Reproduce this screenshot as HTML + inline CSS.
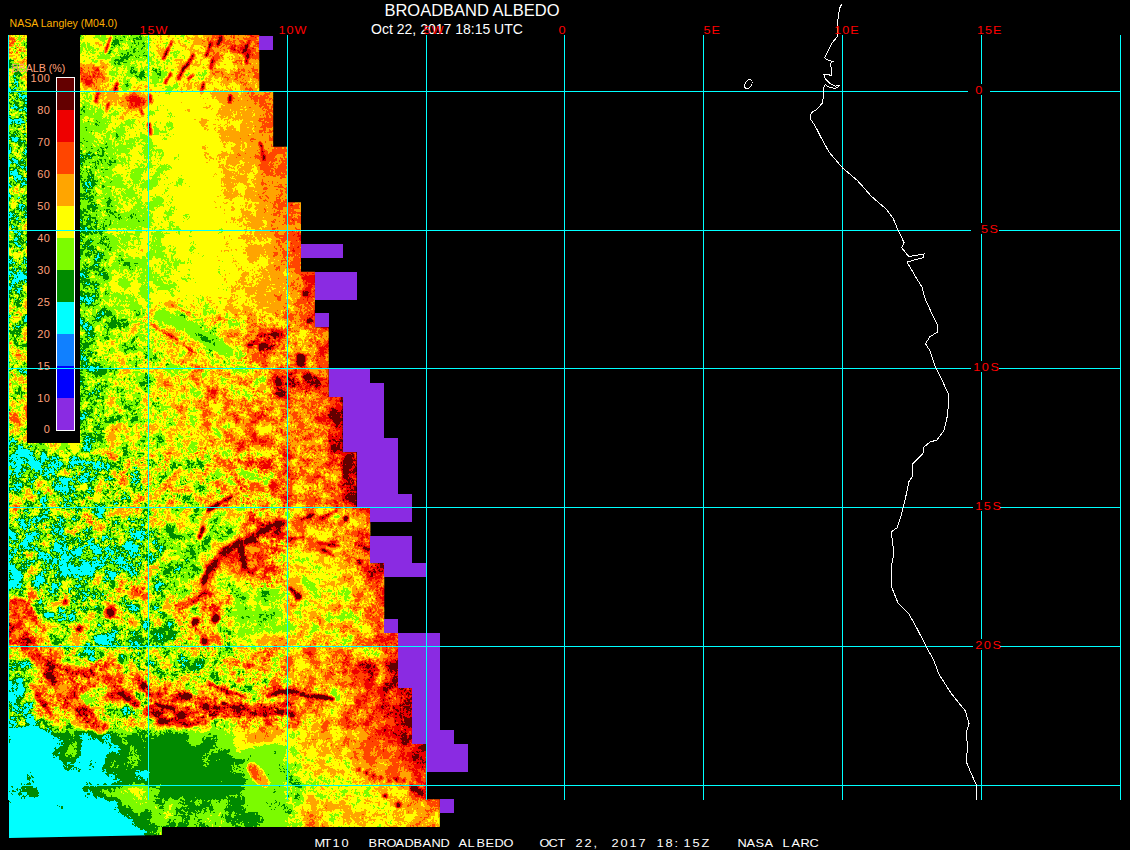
<!DOCTYPE html>
<html><head><meta charset="utf-8"><title>BROADBAND ALBEDO</title>
<style>
html,body{margin:0;padding:0;background:#000;width:1130px;height:850px;overflow:hidden}
svg{display:block;position:absolute;left:0;top:0}
text{white-space:pre}
</style></head><body>
<svg width="1130" height="850" viewBox="0 0 1130 850">
<defs>
<filter id="b3" filterUnits="userSpaceOnUse" x="-32.1" y="-5.9" width="527.4" height="888.3" color-interpolation-filters="sRGB"><feGaussianBlur stdDeviation="3.2"/></filter>
<filter id="alb" filterUnits="userSpaceOnUse" x="-32.1" y="-5.9" width="527.4" height="888.3" color-interpolation-filters="sRGB">
<feGaussianBlur in="SourceGraphic" stdDeviation="1.1" result="bl"/>
<feColorMatrix in="bl" type="matrix" values="1 0 0 0 0 1 0 0 0 0 1 0 0 0 0 0 0 0 0 1" result="F"/>
<feColorMatrix in="bl" type="matrix" values="0 1 0 0 0 0 1 0 0 0 0 1 0 0 0 0 0 0 0 1" result="A"/>
<feTurbulence type="fractalNoise" baseFrequency="0.085" numOctaves="3" seed="7" result="tb1"/>
<feTurbulence type="fractalNoise" baseFrequency="0.42" numOctaves="2" seed="3" result="tb2"/>
<feComposite in="tb1" in2="tb2" operator="arithmetic" k1="0" k2="0.62" k3="0.38" k4="0" result="tb"/>
<feColorMatrix in="tb" type="matrix" values="3.2 0 0 0 -1.1 3.2 0 0 0 -1.1 3.2 0 0 0 -1.1 0 0 0 0 1" result="Nz"/>
<feComposite in="Nz" in2="A" operator="arithmetic" k1="1" k2="0" k3="-0.5" k4="0.5" result="T"/>
<feComposite in="F" in2="T" operator="arithmetic" k1="0" k2="1" k3="1" k4="-0.5" result="V"/>
<feComponentTransfer in="V">
<feFuncR type="discrete" tableValues="0.000 0.000 0.000 0.000 0.000 0.486 1.000 1.000 1.000 0.933 0.392"/>
<feFuncG type="discrete" tableValues="1.000 1.000 1.000 1.000 0.545 0.988 1.000 0.647 0.271 0.000 0.000"/>
<feFuncB type="discrete" tableValues="1.000 1.000 1.000 1.000 0.000 0.000 0.000 0.000 0.000 0.000 0.000"/>
</feComponentTransfer>
</filter>
<clipPath id="dclip"><polygon points="9.0,35.0 259.3,35.0 259.3,49.7 259.3,49.7 259.3,63.5 259.3,63.5 259.3,77.4 259.3,77.4 259.3,91.3 273.2,91.3 273.2,105.2 273.2,105.2 273.2,119.1 273.2,119.1 273.2,132.9 273.2,132.9 273.2,146.8 287.1,146.8 287.1,160.7 287.1,160.7 287.1,174.6 287.1,174.6 287.1,188.5 287.1,188.5 287.1,202.3 301.0,202.3 301.0,216.2 301.0,216.2 301.0,230.1 301.0,230.1 301.0,244.0 301.0,244.0 301.0,257.9 301.0,257.9 301.0,271.7 314.9,271.7 314.9,285.6 314.9,285.6 314.9,299.5 314.9,299.5 314.9,313.4 314.9,313.4 314.9,327.3 328.7,327.3 328.7,341.1 328.7,341.1 328.7,355.0 328.7,355.0 328.7,368.9 328.7,368.9 328.7,382.8 328.7,382.8 328.7,396.7 342.6,396.7 342.6,410.5 342.6,410.5 342.6,424.4 342.6,424.4 342.6,438.3 342.6,438.3 342.6,452.2 356.5,452.2 356.5,466.1 356.5,466.1 356.5,479.9 356.5,479.9 356.5,493.8 356.5,493.8 356.5,507.7 370.4,507.7 370.4,521.6 370.4,521.6 370.4,535.5 370.4,535.5 370.4,549.3 370.4,549.3 370.4,563.2 384.3,563.2 384.3,577.1 384.3,577.1 384.3,591.0 384.3,591.0 384.3,604.9 384.3,604.9 384.3,618.7 384.3,618.7 384.3,632.6 398.1,632.6 398.1,646.5 398.1,646.5 398.1,660.4 398.1,660.4 398.1,674.3 398.1,674.3 398.1,688.1 412.0,688.1 412.0,702.0 412.0,702.0 412.0,715.9 412.0,715.9 412.0,729.8 412.0,729.8 412.0,743.7 425.9,743.7 425.9,757.5 425.9,757.5 425.9,771.4 425.9,771.4 425.9,785.3 425.9,785.3 425.9,799.2 439.8,799.2 439.8,813.1 439.8,813.1 439.8,826.9 162.0,826.9 162.0,835.0 9.0,838.0"/></clipPath>
</defs>
<rect width="1130" height="850" fill="#000"/>
<g clip-path="url(#dclip)">
<g filter="url(#alb)">
<g filter="url(#b3)"><g transform="translate(9.50 35.78) scale(13.88)" shape-rendering="crispEdges"><rect x="-3" y="-3" width="4" height="1" fill="#a25800"/><rect x="1" y="-3" width="1" height="1" fill="#975800"/><rect x="2" y="-3" width="2" height="1" fill="#972e00"/><rect x="4" y="-3" width="2" height="1" fill="#832e00"/><rect x="6" y="-3" width="1" height="1" fill="#8f2e00"/><rect x="7" y="-3" width="1" height="1" fill="#812e00"/><rect x="8" y="-3" width="1" height="1" fill="#882e00"/><rect x="9" y="-3" width="1" height="1" fill="#812e00"/><rect x="10" y="-3" width="1" height="1" fill="#962e00"/><rect x="11" y="-3" width="1" height="1" fill="#932e00"/><rect x="12" y="-3" width="1" height="1" fill="#982e00"/><rect x="13" y="-3" width="1" height="1" fill="#9c2e00"/><rect x="14" y="-3" width="1" height="1" fill="#b72e00"/><rect x="15" y="-3" width="2" height="1" fill="#bc2e00"/><rect x="17" y="-3" width="9" height="1" fill="#c02e00"/><rect x="26" y="-3" width="9" height="1" fill="#bc2e00"/><rect x="-3" y="-2" width="4" height="1" fill="#a25800"/><rect x="1" y="-2" width="1" height="1" fill="#975800"/><rect x="2" y="-2" width="2" height="1" fill="#972e00"/><rect x="4" y="-2" width="2" height="1" fill="#832e00"/><rect x="6" y="-2" width="1" height="1" fill="#8f2e00"/><rect x="7" y="-2" width="1" height="1" fill="#812e00"/><rect x="8" y="-2" width="1" height="1" fill="#882e00"/><rect x="9" y="-2" width="1" height="1" fill="#812e00"/><rect x="10" y="-2" width="1" height="1" fill="#962e00"/><rect x="11" y="-2" width="1" height="1" fill="#932e00"/><rect x="12" y="-2" width="1" height="1" fill="#982e00"/><rect x="13" y="-2" width="1" height="1" fill="#9c2e00"/><rect x="14" y="-2" width="1" height="1" fill="#b72e00"/><rect x="15" y="-2" width="2" height="1" fill="#bc2e00"/><rect x="17" y="-2" width="9" height="1" fill="#c02e00"/><rect x="26" y="-2" width="9" height="1" fill="#bc2e00"/><rect x="-3" y="-1" width="4" height="1" fill="#a25800"/><rect x="1" y="-1" width="1" height="1" fill="#975800"/><rect x="2" y="-1" width="2" height="1" fill="#972e00"/><rect x="4" y="-1" width="2" height="1" fill="#832e00"/><rect x="6" y="-1" width="1" height="1" fill="#8f2e00"/><rect x="7" y="-1" width="1" height="1" fill="#812e00"/><rect x="8" y="-1" width="1" height="1" fill="#882e00"/><rect x="9" y="-1" width="1" height="1" fill="#812e00"/><rect x="10" y="-1" width="1" height="1" fill="#962e00"/><rect x="11" y="-1" width="1" height="1" fill="#932e00"/><rect x="12" y="-1" width="1" height="1" fill="#982e00"/><rect x="13" y="-1" width="1" height="1" fill="#9c2e00"/><rect x="14" y="-1" width="1" height="1" fill="#b72e00"/><rect x="15" y="-1" width="2" height="1" fill="#bc2e00"/><rect x="17" y="-1" width="9" height="1" fill="#c02e00"/><rect x="26" y="-1" width="9" height="1" fill="#bc2e00"/><rect x="-3" y="0" width="4" height="1" fill="#a25800"/><rect x="1" y="0" width="1" height="1" fill="#975800"/><rect x="2" y="0" width="2" height="1" fill="#972e00"/><rect x="4" y="0" width="2" height="1" fill="#832e00"/><rect x="6" y="0" width="1" height="1" fill="#8f2e00"/><rect x="7" y="0" width="1" height="1" fill="#812e00"/><rect x="8" y="0" width="1" height="1" fill="#882e00"/><rect x="9" y="0" width="1" height="1" fill="#812e00"/><rect x="10" y="0" width="1" height="1" fill="#962e00"/><rect x="11" y="0" width="1" height="1" fill="#932e00"/><rect x="12" y="0" width="1" height="1" fill="#982e00"/><rect x="13" y="0" width="1" height="1" fill="#9c2e00"/><rect x="14" y="0" width="1" height="1" fill="#b72e00"/><rect x="15" y="0" width="2" height="1" fill="#bc2e00"/><rect x="17" y="0" width="9" height="1" fill="#c02e00"/><rect x="26" y="0" width="9" height="1" fill="#bc2e00"/><rect x="-3" y="1" width="5" height="1" fill="#975800"/><rect x="2" y="1" width="2" height="1" fill="#972e00"/><rect x="4" y="1" width="2" height="1" fill="#8f2e00"/><rect x="6" y="1" width="1" height="1" fill="#882e00"/><rect x="7" y="1" width="1" height="1" fill="#772e00"/><rect x="8" y="1" width="1" height="1" fill="#7c2e00"/><rect x="9" y="1" width="1" height="1" fill="#7e2e00"/><rect x="10" y="1" width="1" height="1" fill="#8c2e00"/><rect x="11" y="1" width="1" height="1" fill="#962e00"/><rect x="12" y="1" width="1" height="1" fill="#932e00"/><rect x="13" y="1" width="1" height="1" fill="#9a2e00"/><rect x="14" y="1" width="1" height="1" fill="#b52e00"/><rect x="15" y="1" width="1" height="1" fill="#a92e00"/><rect x="16" y="1" width="1" height="1" fill="#ae2e00"/><rect x="17" y="1" width="18" height="1" fill="#bc2e00"/><rect x="-3" y="2" width="5" height="1" fill="#8b5800"/><rect x="2" y="2" width="2" height="1" fill="#8b2e00"/><rect x="4" y="2" width="2" height="1" fill="#b52e00"/><rect x="6" y="2" width="1" height="1" fill="#b32e00"/><rect x="7" y="2" width="1" height="1" fill="#8c2e00"/><rect x="8" y="2" width="1" height="1" fill="#7c2e00"/><rect x="9" y="2" width="1" height="1" fill="#7e2e00"/><rect x="10" y="2" width="1" height="1" fill="#852e00"/><rect x="11" y="2" width="1" height="1" fill="#932e00"/><rect x="12" y="2" width="2" height="1" fill="#9a2e00"/><rect x="14" y="2" width="1" height="1" fill="#a52e00"/><rect x="15" y="2" width="1" height="1" fill="#a72e00"/><rect x="16" y="2" width="1" height="1" fill="#a92e00"/><rect x="17" y="2" width="3" height="1" fill="#b52e00"/><rect x="20" y="2" width="15" height="1" fill="#bc2e00"/><rect x="-3" y="3" width="5" height="1" fill="#805800"/><rect x="2" y="3" width="2" height="1" fill="#802e00"/><rect x="4" y="3" width="3" height="1" fill="#b52e00"/><rect x="7" y="3" width="1" height="1" fill="#962e00"/><rect x="8" y="3" width="1" height="1" fill="#832e00"/><rect x="9" y="3" width="1" height="1" fill="#8c2e00"/><rect x="10" y="3" width="1" height="1" fill="#882e00"/><rect x="11" y="3" width="1" height="1" fill="#912e00"/><rect x="12" y="3" width="1" height="1" fill="#9a2e00"/><rect x="13" y="3" width="1" height="1" fill="#9c2e00"/><rect x="14" y="3" width="1" height="1" fill="#a22e00"/><rect x="15" y="3" width="1" height="1" fill="#a72e00"/><rect x="16" y="3" width="1" height="1" fill="#a92e00"/><rect x="17" y="3" width="2" height="1" fill="#b02e00"/><rect x="19" y="3" width="12" height="1" fill="#bc2e00"/><rect x="31" y="3" width="4" height="1" fill="#c02e00"/><rect x="-3" y="4" width="5" height="1" fill="#6d5800"/><rect x="2" y="4" width="2" height="1" fill="#6d2e00"/><rect x="4" y="4" width="1" height="1" fill="#8b2e00"/><rect x="5" y="4" width="1" height="1" fill="#8b2500"/><rect x="6" y="4" width="1" height="1" fill="#a22500"/><rect x="7" y="4" width="1" height="1" fill="#a52500"/><rect x="8" y="4" width="1" height="1" fill="#b52500"/><rect x="9" y="4" width="1" height="1" fill="#b32500"/><rect x="10" y="4" width="1" height="1" fill="#9b1500"/><rect x="11" y="4" width="1" height="1" fill="#941500"/><rect x="12" y="4" width="1" height="1" fill="#991500"/><rect x="13" y="4" width="1" height="1" fill="#9b1500"/><rect x="14" y="4" width="1" height="1" fill="#9e1500"/><rect x="15" y="4" width="2" height="1" fill="#ac1c00"/><rect x="17" y="4" width="1" height="1" fill="#ae1c00"/><rect x="18" y="4" width="2" height="1" fill="#bc1c00"/><rect x="20" y="4" width="7" height="1" fill="#bc2e00"/><rect x="27" y="4" width="8" height="1" fill="#c02e00"/><rect x="-3" y="5" width="5" height="1" fill="#6f5800"/><rect x="2" y="5" width="2" height="1" fill="#6f2e00"/><rect x="4" y="5" width="1" height="1" fill="#802e00"/><rect x="5" y="5" width="1" height="1" fill="#802500"/><rect x="6" y="5" width="1" height="1" fill="#8b2500"/><rect x="7" y="5" width="1" height="1" fill="#972500"/><rect x="8" y="5" width="1" height="1" fill="#9e2500"/><rect x="9" y="5" width="1" height="1" fill="#a22500"/><rect x="10" y="5" width="2" height="1" fill="#921500"/><rect x="12" y="5" width="2" height="1" fill="#991500"/><rect x="14" y="5" width="1" height="1" fill="#9b1500"/><rect x="15" y="5" width="1" height="1" fill="#a71c00"/><rect x="16" y="5" width="1" height="1" fill="#a51c00"/><rect x="17" y="5" width="1" height="1" fill="#ae1c00"/><rect x="18" y="5" width="2" height="1" fill="#b91c00"/><rect x="20" y="5" width="4" height="1" fill="#b92e00"/><rect x="24" y="5" width="11" height="1" fill="#c02e00"/><rect x="-3" y="6" width="5" height="1" fill="#805800"/><rect x="2" y="6" width="3" height="1" fill="#802e00"/><rect x="5" y="6" width="1" height="1" fill="#802500"/><rect x="6" y="6" width="2" height="1" fill="#842500"/><rect x="8" y="6" width="1" height="1" fill="#8b2500"/><rect x="9" y="6" width="1" height="1" fill="#922500"/><rect x="10" y="6" width="1" height="1" fill="#8b1500"/><rect x="11" y="6" width="1" height="1" fill="#921500"/><rect x="12" y="6" width="1" height="1" fill="#971500"/><rect x="13" y="6" width="1" height="1" fill="#991500"/><rect x="14" y="6" width="1" height="1" fill="#9b1500"/><rect x="15" y="6" width="1" height="1" fill="#a71c00"/><rect x="16" y="6" width="1" height="1" fill="#a21c00"/><rect x="17" y="6" width="1" height="1" fill="#ae1c00"/><rect x="18" y="6" width="2" height="1" fill="#b91c00"/><rect x="20" y="6" width="1" height="1" fill="#b92e00"/><rect x="21" y="6" width="14" height="1" fill="#c02e00"/><rect x="-3" y="7" width="5" height="1" fill="#745800"/><rect x="2" y="7" width="2" height="1" fill="#742e00"/><rect x="4" y="7" width="1" height="1" fill="#7d2e00"/><rect x="5" y="7" width="1" height="1" fill="#7d2500"/><rect x="6" y="7" width="1" height="1" fill="#822500"/><rect x="7" y="7" width="1" height="1" fill="#842500"/><rect x="8" y="7" width="1" height="1" fill="#892500"/><rect x="9" y="7" width="1" height="1" fill="#8d2500"/><rect x="10" y="7" width="1" height="1" fill="#8b1500"/><rect x="11" y="7" width="1" height="1" fill="#921500"/><rect x="12" y="7" width="2" height="1" fill="#971500"/><rect x="14" y="7" width="1" height="1" fill="#991500"/><rect x="15" y="7" width="1" height="1" fill="#a51c00"/><rect x="16" y="7" width="1" height="1" fill="#ac1c00"/><rect x="17" y="7" width="1" height="1" fill="#ae1c00"/><rect x="18" y="7" width="2" height="1" fill="#b71c00"/><rect x="20" y="7" width="15" height="1" fill="#c02e00"/><rect x="-3" y="8" width="5" height="1" fill="#6d5800"/><rect x="2" y="8" width="2" height="1" fill="#6d2e00"/><rect x="4" y="8" width="1" height="1" fill="#752e00"/><rect x="5" y="8" width="1" height="1" fill="#753800"/><rect x="6" y="8" width="1" height="1" fill="#7d3800"/><rect x="7" y="8" width="1" height="1" fill="#842500"/><rect x="8" y="8" width="1" height="1" fill="#892500"/><rect x="9" y="8" width="1" height="1" fill="#8d2500"/><rect x="10" y="8" width="1" height="1" fill="#891500"/><rect x="11" y="8" width="1" height="1" fill="#901500"/><rect x="12" y="8" width="2" height="1" fill="#971500"/><rect x="14" y="8" width="1" height="1" fill="#991500"/><rect x="15" y="8" width="1" height="1" fill="#a51c00"/><rect x="16" y="8" width="1" height="1" fill="#ae1c00"/><rect x="17" y="8" width="1" height="1" fill="#ac1c00"/><rect x="18" y="8" width="1" height="1" fill="#b91c00"/><rect x="19" y="8" width="1" height="1" fill="#c01c00"/><rect x="20" y="8" width="8" height="1" fill="#c02e00"/><rect x="28" y="8" width="7" height="1" fill="#be2e00"/><rect x="-3" y="9" width="5" height="1" fill="#685800"/><rect x="2" y="9" width="2" height="1" fill="#682e00"/><rect x="4" y="9" width="1" height="1" fill="#732e00"/><rect x="5" y="9" width="1" height="1" fill="#733800"/><rect x="6" y="9" width="1" height="1" fill="#7d3800"/><rect x="7" y="9" width="1" height="1" fill="#862500"/><rect x="8" y="9" width="1" height="1" fill="#892500"/><rect x="9" y="9" width="1" height="1" fill="#8d2500"/><rect x="10" y="9" width="1" height="1" fill="#8b1500"/><rect x="11" y="9" width="1" height="1" fill="#901500"/><rect x="12" y="9" width="2" height="1" fill="#971500"/><rect x="14" y="9" width="1" height="1" fill="#991500"/><rect x="15" y="9" width="1" height="1" fill="#9e1c00"/><rect x="16" y="9" width="2" height="1" fill="#a91c00"/><rect x="18" y="9" width="1" height="1" fill="#be1c00"/><rect x="19" y="9" width="1" height="1" fill="#c01c00"/><rect x="20" y="9" width="5" height="1" fill="#c02e00"/><rect x="25" y="9" width="10" height="1" fill="#be2e00"/><rect x="-3" y="10" width="5" height="1" fill="#745800"/><rect x="2" y="10" width="2" height="1" fill="#742e00"/><rect x="4" y="10" width="1" height="1" fill="#752e00"/><rect x="5" y="10" width="1" height="1" fill="#753800"/><rect x="6" y="10" width="1" height="1" fill="#7d3800"/><rect x="7" y="10" width="1" height="1" fill="#862500"/><rect x="8" y="10" width="1" height="1" fill="#892500"/><rect x="9" y="10" width="1" height="1" fill="#8b2500"/><rect x="10" y="10" width="1" height="1" fill="#8b1500"/><rect x="11" y="10" width="1" height="1" fill="#901500"/><rect x="12" y="10" width="1" height="1" fill="#941500"/><rect x="13" y="10" width="2" height="1" fill="#971500"/><rect x="15" y="10" width="1" height="1" fill="#a01c00"/><rect x="16" y="10" width="1" height="1" fill="#a71c00"/><rect x="17" y="10" width="1" height="1" fill="#a21c00"/><rect x="18" y="10" width="1" height="1" fill="#ae1c00"/><rect x="19" y="10" width="1" height="1" fill="#bc1c00"/><rect x="20" y="10" width="2" height="1" fill="#bc2e00"/><rect x="22" y="10" width="13" height="1" fill="#be2e00"/><rect x="-3" y="11" width="5" height="1" fill="#805800"/><rect x="2" y="11" width="2" height="1" fill="#802e00"/><rect x="4" y="11" width="1" height="1" fill="#732e00"/><rect x="5" y="11" width="1" height="1" fill="#733800"/><rect x="6" y="11" width="1" height="1" fill="#7b3800"/><rect x="7" y="11" width="1" height="1" fill="#862500"/><rect x="8" y="11" width="2" height="1" fill="#892500"/><rect x="10" y="11" width="1" height="1" fill="#8b1500"/><rect x="11" y="11" width="1" height="1" fill="#901500"/><rect x="12" y="11" width="1" height="1" fill="#941500"/><rect x="13" y="11" width="2" height="1" fill="#971500"/><rect x="15" y="11" width="2" height="1" fill="#9e1c00"/><rect x="17" y="11" width="1" height="1" fill="#a71c00"/><rect x="18" y="11" width="1" height="1" fill="#b01c00"/><rect x="19" y="11" width="1" height="1" fill="#b91c00"/><rect x="20" y="11" width="1" height="1" fill="#b92e00"/><rect x="21" y="11" width="14" height="1" fill="#be2e00"/><rect x="-3" y="12" width="5" height="1" fill="#6f5800"/><rect x="2" y="12" width="2" height="1" fill="#6f2e00"/><rect x="4" y="12" width="1" height="1" fill="#6e2e00"/><rect x="5" y="12" width="1" height="1" fill="#6e3800"/><rect x="6" y="12" width="1" height="1" fill="#763800"/><rect x="7" y="12" width="1" height="1" fill="#842500"/><rect x="8" y="12" width="1" height="1" fill="#862500"/><rect x="9" y="12" width="1" height="1" fill="#842500"/><rect x="10" y="12" width="1" height="1" fill="#8b1500"/><rect x="11" y="12" width="1" height="1" fill="#901500"/><rect x="12" y="12" width="1" height="1" fill="#941500"/><rect x="13" y="12" width="2" height="1" fill="#971500"/><rect x="15" y="12" width="1" height="1" fill="#9b1c00"/><rect x="16" y="12" width="1" height="1" fill="#9e1c00"/><rect x="17" y="12" width="1" height="1" fill="#a91c00"/><rect x="18" y="12" width="1" height="1" fill="#ae1c00"/><rect x="19" y="12" width="1" height="1" fill="#b31c00"/><rect x="20" y="12" width="3" height="1" fill="#be2a00"/><rect x="23" y="12" width="12" height="1" fill="#be2e00"/><rect x="-3" y="13" width="5" height="1" fill="#805800"/><rect x="2" y="13" width="2" height="1" fill="#802e00"/><rect x="4" y="13" width="1" height="1" fill="#732e00"/><rect x="5" y="13" width="1" height="1" fill="#733800"/><rect x="6" y="13" width="1" height="1" fill="#723800"/><rect x="7" y="13" width="1" height="1" fill="#802500"/><rect x="8" y="13" width="2" height="1" fill="#822500"/><rect x="10" y="13" width="1" height="1" fill="#8b1500"/><rect x="11" y="13" width="1" height="1" fill="#901500"/><rect x="12" y="13" width="2" height="1" fill="#941500"/><rect x="14" y="13" width="1" height="1" fill="#971500"/><rect x="15" y="13" width="1" height="1" fill="#991c00"/><rect x="16" y="13" width="1" height="1" fill="#a01c00"/><rect x="17" y="13" width="1" height="1" fill="#a51c00"/><rect x="18" y="13" width="1" height="1" fill="#ae1c00"/><rect x="19" y="13" width="1" height="1" fill="#b31c00"/><rect x="20" y="13" width="3" height="1" fill="#c02a00"/><rect x="23" y="13" width="6" height="1" fill="#c02e00"/><rect x="29" y="13" width="6" height="1" fill="#d12e00"/><rect x="-3" y="14" width="5" height="1" fill="#7b5800"/><rect x="2" y="14" width="2" height="1" fill="#7b2e00"/><rect x="4" y="14" width="1" height="1" fill="#752e00"/><rect x="5" y="14" width="1" height="1" fill="#753800"/><rect x="6" y="14" width="1" height="1" fill="#7d3800"/><rect x="7" y="14" width="1" height="1" fill="#8d2500"/><rect x="8" y="14" width="1" height="1" fill="#862500"/><rect x="9" y="14" width="1" height="1" fill="#8b2500"/><rect x="10" y="14" width="1" height="1" fill="#861500"/><rect x="11" y="14" width="1" height="1" fill="#8d1500"/><rect x="12" y="14" width="1" height="1" fill="#921500"/><rect x="13" y="14" width="2" height="1" fill="#971500"/><rect x="15" y="14" width="1" height="1" fill="#971c00"/><rect x="16" y="14" width="1" height="1" fill="#991c00"/><rect x="17" y="14" width="1" height="1" fill="#ac1c00"/><rect x="18" y="14" width="1" height="1" fill="#a91c00"/><rect x="19" y="14" width="1" height="1" fill="#b91c00"/><rect x="20" y="14" width="3" height="1" fill="#cc2a00"/><rect x="23" y="14" width="3" height="1" fill="#cc2e00"/><rect x="26" y="14" width="9" height="1" fill="#d12e00"/><rect x="-3" y="15" width="5" height="1" fill="#765800"/><rect x="2" y="15" width="2" height="1" fill="#762e00"/><rect x="4" y="15" width="1" height="1" fill="#702e00"/><rect x="5" y="15" width="1" height="1" fill="#703800"/><rect x="6" y="15" width="1" height="1" fill="#743800"/><rect x="7" y="15" width="1" height="1" fill="#802500"/><rect x="8" y="15" width="1" height="1" fill="#862500"/><rect x="9" y="15" width="1" height="1" fill="#902500"/><rect x="10" y="15" width="1" height="1" fill="#891500"/><rect x="11" y="15" width="1" height="1" fill="#8b1500"/><rect x="12" y="15" width="1" height="1" fill="#901500"/><rect x="13" y="15" width="1" height="1" fill="#941500"/><rect x="14" y="15" width="1" height="1" fill="#971500"/><rect x="15" y="15" width="1" height="1" fill="#971c00"/><rect x="16" y="15" width="1" height="1" fill="#991c00"/><rect x="17" y="15" width="2" height="1" fill="#a71c00"/><rect x="19" y="15" width="1" height="1" fill="#b51c00"/><rect x="20" y="15" width="3" height="1" fill="#c02a00"/><rect x="23" y="15" width="12" height="1" fill="#d12e00"/><rect x="-3" y="16" width="5" height="1" fill="#6d5800"/><rect x="2" y="16" width="2" height="1" fill="#6d2e00"/><rect x="4" y="16" width="1" height="1" fill="#702e00"/><rect x="5" y="16" width="1" height="1" fill="#703800"/><rect x="6" y="16" width="1" height="1" fill="#723800"/><rect x="7" y="16" width="1" height="1" fill="#862500"/><rect x="8" y="16" width="1" height="1" fill="#822500"/><rect x="9" y="16" width="1" height="1" fill="#862500"/><rect x="10" y="16" width="1" height="1" fill="#8b1500"/><rect x="11" y="16" width="1" height="1" fill="#891500"/><rect x="12" y="16" width="1" height="1" fill="#901500"/><rect x="13" y="16" width="1" height="1" fill="#941500"/><rect x="14" y="16" width="1" height="1" fill="#971500"/><rect x="15" y="16" width="1" height="1" fill="#971c00"/><rect x="16" y="16" width="1" height="1" fill="#991c00"/><rect x="17" y="16" width="1" height="1" fill="#9e1c00"/><rect x="18" y="16" width="1" height="1" fill="#a71c00"/><rect x="19" y="16" width="1" height="1" fill="#ae1c00"/><rect x="20" y="16" width="2" height="1" fill="#b92a00"/><rect x="22" y="16" width="1" height="1" fill="#d12a00"/><rect x="23" y="16" width="12" height="1" fill="#d12e00"/><rect x="-3" y="17" width="5" height="1" fill="#645800"/><rect x="2" y="17" width="2" height="1" fill="#642e00"/><rect x="4" y="17" width="1" height="1" fill="#6e2e00"/><rect x="5" y="17" width="1" height="1" fill="#6e3800"/><rect x="6" y="17" width="1" height="1" fill="#763800"/><rect x="7" y="17" width="1" height="1" fill="#8d2500"/><rect x="8" y="17" width="2" height="1" fill="#862500"/><rect x="10" y="17" width="2" height="1" fill="#8b1500"/><rect x="12" y="17" width="1" height="1" fill="#901500"/><rect x="13" y="17" width="1" height="1" fill="#941500"/><rect x="14" y="17" width="1" height="1" fill="#971500"/><rect x="15" y="17" width="1" height="1" fill="#971c00"/><rect x="16" y="17" width="1" height="1" fill="#991c00"/><rect x="17" y="17" width="1" height="1" fill="#a01c00"/><rect x="18" y="17" width="1" height="1" fill="#a91c00"/><rect x="19" y="17" width="1" height="1" fill="#ae1c00"/><rect x="20" y="17" width="1" height="1" fill="#b72a00"/><rect x="21" y="17" width="2" height="1" fill="#d12a00"/><rect x="23" y="17" width="7" height="1" fill="#d12e00"/><rect x="30" y="17" width="5" height="1" fill="#be2e00"/><rect x="-3" y="18" width="5" height="1" fill="#745800"/><rect x="2" y="18" width="2" height="1" fill="#742e00"/><rect x="4" y="18" width="1" height="1" fill="#702e00"/><rect x="5" y="18" width="1" height="1" fill="#703800"/><rect x="6" y="18" width="1" height="1" fill="#763800"/><rect x="7" y="18" width="1" height="1" fill="#862500"/><rect x="8" y="18" width="1" height="1" fill="#902500"/><rect x="9" y="18" width="1" height="1" fill="#862500"/><rect x="10" y="18" width="2" height="1" fill="#901500"/><rect x="12" y="18" width="1" height="1" fill="#921500"/><rect x="13" y="18" width="1" height="1" fill="#941500"/><rect x="14" y="18" width="1" height="1" fill="#971500"/><rect x="15" y="18" width="1" height="1" fill="#971c00"/><rect x="16" y="18" width="1" height="1" fill="#a21c00"/><rect x="17" y="18" width="1" height="1" fill="#a71c00"/><rect x="18" y="18" width="1" height="1" fill="#a91c00"/><rect x="19" y="18" width="1" height="1" fill="#ae1c00"/><rect x="20" y="18" width="1" height="1" fill="#ae2a00"/><rect x="21" y="18" width="2" height="1" fill="#cc2a00"/><rect x="23" y="18" width="4" height="1" fill="#cc2e00"/><rect x="27" y="18" width="8" height="1" fill="#be2e00"/><rect x="-3" y="19" width="5" height="1" fill="#925800"/><rect x="2" y="19" width="2" height="1" fill="#922e00"/><rect x="4" y="19" width="1" height="1" fill="#752e00"/><rect x="5" y="19" width="1" height="1" fill="#753800"/><rect x="6" y="19" width="1" height="1" fill="#7d3800"/><rect x="7" y="19" width="1" height="1" fill="#8b2500"/><rect x="8" y="19" width="1" height="1" fill="#862500"/><rect x="9" y="19" width="1" height="1" fill="#892500"/><rect x="10" y="19" width="4" height="1" fill="#972e00"/><rect x="14" y="19" width="1" height="1" fill="#992e00"/><rect x="15" y="19" width="1" height="1" fill="#9b1c00"/><rect x="16" y="19" width="2" height="1" fill="#a51c00"/><rect x="18" y="19" width="1" height="1" fill="#a91c00"/><rect x="19" y="19" width="1" height="1" fill="#ae1c00"/><rect x="20" y="19" width="1" height="1" fill="#ae2a00"/><rect x="21" y="19" width="2" height="1" fill="#bc2a00"/><rect x="23" y="19" width="1" height="1" fill="#bc2e00"/><rect x="24" y="19" width="11" height="1" fill="#be2e00"/><rect x="-3" y="20" width="5" height="1" fill="#745800"/><rect x="2" y="20" width="2" height="1" fill="#742e00"/><rect x="4" y="20" width="1" height="1" fill="#6c2e00"/><rect x="5" y="20" width="1" height="1" fill="#6c4100"/><rect x="6" y="20" width="1" height="1" fill="#6f4100"/><rect x="7" y="20" width="1" height="1" fill="#804100"/><rect x="8" y="20" width="1" height="1" fill="#864100"/><rect x="9" y="20" width="1" height="1" fill="#894100"/><rect x="10" y="20" width="1" height="1" fill="#9e4100"/><rect x="11" y="20" width="1" height="1" fill="#8b4100"/><rect x="12" y="20" width="1" height="1" fill="#894100"/><rect x="13" y="20" width="1" height="1" fill="#924100"/><rect x="14" y="20" width="2" height="1" fill="#a04100"/><rect x="16" y="20" width="1" height="1" fill="#a24100"/><rect x="17" y="20" width="2" height="1" fill="#a54100"/><rect x="19" y="20" width="1" height="1" fill="#a94100"/><rect x="20" y="20" width="1" height="1" fill="#bc3800"/><rect x="21" y="20" width="2" height="1" fill="#c73800"/><rect x="23" y="20" width="12" height="1" fill="#be3800"/><rect x="-3" y="21" width="5" height="1" fill="#8b5800"/><rect x="2" y="21" width="2" height="1" fill="#8b2e00"/><rect x="4" y="21" width="1" height="1" fill="#752e00"/><rect x="5" y="21" width="1" height="1" fill="#754100"/><rect x="6" y="21" width="1" height="1" fill="#7d4100"/><rect x="7" y="21" width="1" height="1" fill="#864100"/><rect x="8" y="21" width="2" height="1" fill="#8d4100"/><rect x="10" y="21" width="1" height="1" fill="#894100"/><rect x="11" y="21" width="1" height="1" fill="#974100"/><rect x="12" y="21" width="1" height="1" fill="#924100"/><rect x="13" y="21" width="1" height="1" fill="#844100"/><rect x="14" y="21" width="1" height="1" fill="#804100"/><rect x="15" y="21" width="1" height="1" fill="#9b4100"/><rect x="16" y="21" width="1" height="1" fill="#a24100"/><rect x="17" y="21" width="1" height="1" fill="#b34100"/><rect x="18" y="21" width="1" height="1" fill="#c04100"/><rect x="19" y="21" width="1" height="1" fill="#ce4100"/><rect x="20" y="21" width="1" height="1" fill="#a93800"/><rect x="21" y="21" width="1" height="1" fill="#ac3800"/><rect x="22" y="21" width="13" height="1" fill="#be3800"/><rect x="-3" y="22" width="5" height="1" fill="#995800"/><rect x="2" y="22" width="2" height="1" fill="#992e00"/><rect x="4" y="22" width="1" height="1" fill="#702e00"/><rect x="5" y="22" width="1" height="1" fill="#704100"/><rect x="6" y="22" width="1" height="1" fill="#7d4100"/><rect x="7" y="22" width="1" height="1" fill="#904100"/><rect x="8" y="22" width="1" height="1" fill="#804100"/><rect x="9" y="22" width="1" height="1" fill="#8d4100"/><rect x="10" y="22" width="1" height="1" fill="#894100"/><rect x="11" y="22" width="1" height="1" fill="#974100"/><rect x="12" y="22" width="1" height="1" fill="#a94100"/><rect x="13" y="22" width="1" height="1" fill="#9b4100"/><rect x="14" y="22" width="1" height="1" fill="#804100"/><rect x="15" y="22" width="1" height="1" fill="#8d4100"/><rect x="16" y="22" width="1" height="1" fill="#9e4100"/><rect x="17" y="22" width="1" height="1" fill="#bc4100"/><rect x="18" y="22" width="1" height="1" fill="#ca4100"/><rect x="19" y="22" width="1" height="1" fill="#b94100"/><rect x="20" y="22" width="1" height="1" fill="#a53800"/><rect x="21" y="22" width="1" height="1" fill="#a93800"/><rect x="22" y="22" width="9" height="1" fill="#c03800"/><rect x="31" y="22" width="4" height="1" fill="#e43800"/><rect x="-3" y="23" width="5" height="1" fill="#845800"/><rect x="2" y="23" width="2" height="1" fill="#842e00"/><rect x="4" y="23" width="1" height="1" fill="#6e2e00"/><rect x="5" y="23" width="1" height="1" fill="#6e4100"/><rect x="6" y="23" width="1" height="1" fill="#7d4100"/><rect x="7" y="23" width="1" height="1" fill="#8d4100"/><rect x="8" y="23" width="1" height="1" fill="#864100"/><rect x="9" y="23" width="2" height="1" fill="#8b4100"/><rect x="11" y="23" width="1" height="1" fill="#924100"/><rect x="12" y="23" width="1" height="1" fill="#9b4100"/><rect x="13" y="23" width="1" height="1" fill="#a54100"/><rect x="14" y="23" width="1" height="1" fill="#924100"/><rect x="15" y="23" width="1" height="1" fill="#8b4100"/><rect x="16" y="23" width="1" height="1" fill="#9b4100"/><rect x="17" y="23" width="1" height="1" fill="#a24100"/><rect x="18" y="23" width="1" height="1" fill="#b54100"/><rect x="19" y="23" width="1" height="1" fill="#ac4100"/><rect x="20" y="23" width="1" height="1" fill="#c03800"/><rect x="21" y="23" width="1" height="1" fill="#bc3800"/><rect x="22" y="23" width="6" height="1" fill="#c03800"/><rect x="28" y="23" width="7" height="1" fill="#e43800"/><rect x="-3" y="24" width="5" height="1" fill="#865800"/><rect x="2" y="24" width="2" height="1" fill="#862e00"/><rect x="4" y="24" width="1" height="1" fill="#752e00"/><rect x="5" y="24" width="1" height="1" fill="#754100"/><rect x="6" y="24" width="1" height="1" fill="#7d4100"/><rect x="7" y="24" width="1" height="1" fill="#844100"/><rect x="8" y="24" width="1" height="1" fill="#8b4100"/><rect x="9" y="24" width="1" height="1" fill="#844100"/><rect x="10" y="24" width="1" height="1" fill="#8d4100"/><rect x="11" y="24" width="1" height="1" fill="#9e4100"/><rect x="12" y="24" width="1" height="1" fill="#994100"/><rect x="13" y="24" width="1" height="1" fill="#a24100"/><rect x="14" y="24" width="1" height="1" fill="#a54100"/><rect x="15" y="24" width="2" height="1" fill="#9e4100"/><rect x="17" y="24" width="1" height="1" fill="#a24100"/><rect x="18" y="24" width="1" height="1" fill="#a94100"/><rect x="19" y="24" width="1" height="1" fill="#c54100"/><rect x="20" y="24" width="1" height="1" fill="#ae3800"/><rect x="21" y="24" width="1" height="1" fill="#c03800"/><rect x="22" y="24" width="3" height="1" fill="#c73800"/><rect x="25" y="24" width="10" height="1" fill="#e43800"/><rect x="-3" y="25" width="5" height="1" fill="#975800"/><rect x="2" y="25" width="2" height="1" fill="#972e00"/><rect x="4" y="25" width="1" height="1" fill="#752e00"/><rect x="5" y="25" width="1" height="1" fill="#754100"/><rect x="6" y="25" width="1" height="1" fill="#794100"/><rect x="7" y="25" width="1" height="1" fill="#804100"/><rect x="8" y="25" width="1" height="1" fill="#8d4100"/><rect x="9" y="25" width="1" height="1" fill="#894100"/><rect x="10" y="25" width="1" height="1" fill="#924100"/><rect x="11" y="25" width="2" height="1" fill="#9e4100"/><rect x="13" y="25" width="1" height="1" fill="#a04100"/><rect x="14" y="25" width="1" height="1" fill="#b74100"/><rect x="15" y="25" width="1" height="1" fill="#a24100"/><rect x="16" y="25" width="1" height="1" fill="#974100"/><rect x="17" y="25" width="1" height="1" fill="#a24100"/><rect x="18" y="25" width="1" height="1" fill="#a94100"/><rect x="19" y="25" width="1" height="1" fill="#d14100"/><rect x="20" y="25" width="1" height="1" fill="#bc3800"/><rect x="21" y="25" width="1" height="1" fill="#b53800"/><rect x="22" y="25" width="2" height="1" fill="#c03800"/><rect x="24" y="25" width="11" height="1" fill="#e43800"/><rect x="-3" y="26" width="5" height="1" fill="#995800"/><rect x="2" y="26" width="2" height="1" fill="#992e00"/><rect x="4" y="26" width="1" height="1" fill="#752e00"/><rect x="5" y="26" width="1" height="1" fill="#754100"/><rect x="6" y="26" width="1" height="1" fill="#7d4100"/><rect x="7" y="26" width="1" height="1" fill="#924100"/><rect x="8" y="26" width="1" height="1" fill="#8d4100"/><rect x="9" y="26" width="1" height="1" fill="#894100"/><rect x="10" y="26" width="1" height="1" fill="#924100"/><rect x="11" y="26" width="1" height="1" fill="#9b4100"/><rect x="12" y="26" width="2" height="1" fill="#9e4100"/><rect x="14" y="26" width="1" height="1" fill="#b94100"/><rect x="15" y="26" width="1" height="1" fill="#a94100"/><rect x="16" y="26" width="1" height="1" fill="#a74100"/><rect x="17" y="26" width="1" height="1" fill="#a94100"/><rect x="18" y="26" width="1" height="1" fill="#b34100"/><rect x="19" y="26" width="1" height="1" fill="#b94100"/><rect x="20" y="26" width="2" height="1" fill="#b53800"/><rect x="22" y="26" width="1" height="1" fill="#bc3800"/><rect x="23" y="26" width="12" height="1" fill="#e43800"/><rect x="-3" y="27" width="5" height="1" fill="#9b5800"/><rect x="2" y="27" width="2" height="1" fill="#9b2e00"/><rect x="4" y="27" width="1" height="1" fill="#702e00"/><rect x="5" y="27" width="1" height="1" fill="#704100"/><rect x="6" y="27" width="1" height="1" fill="#794100"/><rect x="7" y="27" width="1" height="1" fill="#8d4100"/><rect x="8" y="27" width="1" height="1" fill="#7d4100"/><rect x="9" y="27" width="1" height="1" fill="#804100"/><rect x="10" y="27" width="1" height="1" fill="#8d4100"/><rect x="11" y="27" width="1" height="1" fill="#974100"/><rect x="12" y="27" width="1" height="1" fill="#9b4100"/><rect x="13" y="27" width="1" height="1" fill="#9e4100"/><rect x="14" y="27" width="1" height="1" fill="#a54100"/><rect x="15" y="27" width="1" height="1" fill="#a94100"/><rect x="16" y="27" width="1" height="1" fill="#b54100"/><rect x="17" y="27" width="1" height="1" fill="#b74100"/><rect x="18" y="27" width="1" height="1" fill="#b54100"/><rect x="19" y="27" width="1" height="1" fill="#b74100"/><rect x="20" y="27" width="1" height="1" fill="#ac3800"/><rect x="21" y="27" width="1" height="1" fill="#b53800"/><rect x="22" y="27" width="1" height="1" fill="#be3800"/><rect x="23" y="27" width="12" height="1" fill="#e43800"/><rect x="-3" y="28" width="5" height="1" fill="#975800"/><rect x="2" y="28" width="1" height="1" fill="#972e00"/><rect x="3" y="28" width="1" height="1" fill="#9b2e00"/><rect x="4" y="28" width="1" height="1" fill="#752e00"/><rect x="5" y="28" width="1" height="1" fill="#754100"/><rect x="6" y="28" width="1" height="1" fill="#7d4100"/><rect x="7" y="28" width="1" height="1" fill="#9b4100"/><rect x="8" y="28" width="1" height="1" fill="#924100"/><rect x="9" y="28" width="1" height="1" fill="#904100"/><rect x="10" y="28" width="1" height="1" fill="#924100"/><rect x="11" y="28" width="1" height="1" fill="#8d4100"/><rect x="12" y="28" width="1" height="1" fill="#944100"/><rect x="13" y="28" width="1" height="1" fill="#9e4100"/><rect x="14" y="28" width="1" height="1" fill="#a24100"/><rect x="15" y="28" width="1" height="1" fill="#a74100"/><rect x="16" y="28" width="1" height="1" fill="#b54100"/><rect x="17" y="28" width="1" height="1" fill="#b74100"/><rect x="18" y="28" width="1" height="1" fill="#ac4100"/><rect x="19" y="28" width="1" height="1" fill="#b74100"/><rect x="20" y="28" width="1" height="1" fill="#b33800"/><rect x="21" y="28" width="1" height="1" fill="#b53800"/><rect x="22" y="28" width="1" height="1" fill="#b73800"/><rect x="23" y="28" width="12" height="1" fill="#e43800"/><rect x="-3" y="29" width="4" height="1" fill="#745800"/><rect x="1" y="29" width="1" height="1" fill="#6f5800"/><rect x="2" y="29" width="1" height="1" fill="#862e00"/><rect x="3" y="29" width="1" height="1" fill="#9b2e00"/><rect x="4" y="29" width="1" height="1" fill="#8b2e00"/><rect x="5" y="29" width="1" height="1" fill="#754100"/><rect x="6" y="29" width="1" height="1" fill="#7d4100"/><rect x="7" y="29" width="1" height="1" fill="#904100"/><rect x="8" y="29" width="1" height="1" fill="#8b4100"/><rect x="9" y="29" width="1" height="1" fill="#824100"/><rect x="10" y="29" width="1" height="1" fill="#924100"/><rect x="11" y="29" width="1" height="1" fill="#8d4100"/><rect x="12" y="29" width="1" height="1" fill="#924100"/><rect x="13" y="29" width="1" height="1" fill="#9b4100"/><rect x="14" y="29" width="2" height="1" fill="#a24100"/><rect x="16" y="29" width="1" height="1" fill="#b34100"/><rect x="17" y="29" width="1" height="1" fill="#b54100"/><rect x="18" y="29" width="1" height="1" fill="#b94100"/><rect x="19" y="29" width="1" height="1" fill="#be4100"/><rect x="20" y="29" width="2" height="1" fill="#b53800"/><rect x="22" y="29" width="1" height="1" fill="#b73800"/><rect x="23" y="29" width="12" height="1" fill="#e43800"/><rect x="-3" y="30" width="4" height="1" fill="#496100"/><rect x="1" y="30" width="1" height="1" fill="#596100"/><rect x="2" y="30" width="1" height="1" fill="#556100"/><rect x="3" y="30" width="1" height="1" fill="#606100"/><rect x="4" y="30" width="1" height="1" fill="#6c6100"/><rect x="5" y="30" width="1" height="1" fill="#726100"/><rect x="6" y="30" width="1" height="1" fill="#7d6100"/><rect x="7" y="30" width="1" height="1" fill="#a06100"/><rect x="8" y="30" width="1" height="1" fill="#906100"/><rect x="9" y="30" width="1" height="1" fill="#866100"/><rect x="10" y="30" width="1" height="1" fill="#975600"/><rect x="11" y="30" width="1" height="1" fill="#995600"/><rect x="12" y="30" width="1" height="1" fill="#945600"/><rect x="13" y="30" width="1" height="1" fill="#925600"/><rect x="14" y="30" width="1" height="1" fill="#9e5600"/><rect x="15" y="30" width="1" height="1" fill="#a05600"/><rect x="16" y="30" width="1" height="1" fill="#b35600"/><rect x="17" y="30" width="1" height="1" fill="#a95600"/><rect x="18" y="30" width="1" height="1" fill="#b55600"/><rect x="19" y="30" width="1" height="1" fill="#b95600"/><rect x="20" y="30" width="1" height="1" fill="#b73c00"/><rect x="21" y="30" width="1" height="1" fill="#b53c00"/><rect x="22" y="30" width="1" height="1" fill="#b73c00"/><rect x="23" y="30" width="1" height="1" fill="#c53c00"/><rect x="24" y="30" width="11" height="1" fill="#e43c00"/><rect x="-3" y="31" width="4" height="1" fill="#606100"/><rect x="1" y="31" width="1" height="1" fill="#596100"/><rect x="2" y="31" width="1" height="1" fill="#606100"/><rect x="3" y="31" width="1" height="1" fill="#676100"/><rect x="4" y="31" width="1" height="1" fill="#866100"/><rect x="5" y="31" width="1" height="1" fill="#696100"/><rect x="6" y="31" width="1" height="1" fill="#676100"/><rect x="7" y="31" width="1" height="1" fill="#846100"/><rect x="8" y="31" width="1" height="1" fill="#8d6100"/><rect x="9" y="31" width="1" height="1" fill="#846100"/><rect x="10" y="31" width="2" height="1" fill="#945600"/><rect x="12" y="31" width="1" height="1" fill="#905600"/><rect x="13" y="31" width="1" height="1" fill="#8b5600"/><rect x="14" y="31" width="1" height="1" fill="#9e5600"/><rect x="15" y="31" width="1" height="1" fill="#a55600"/><rect x="16" y="31" width="1" height="1" fill="#a05600"/><rect x="17" y="31" width="1" height="1" fill="#a25600"/><rect x="18" y="31" width="1" height="1" fill="#ae5600"/><rect x="19" y="31" width="1" height="1" fill="#bc5600"/><rect x="20" y="31" width="1" height="1" fill="#b73c00"/><rect x="21" y="31" width="1" height="1" fill="#ae3c00"/><rect x="22" y="31" width="1" height="1" fill="#b53c00"/><rect x="23" y="31" width="1" height="1" fill="#bc3c00"/><rect x="24" y="31" width="6" height="1" fill="#e43c00"/><rect x="30" y="31" width="5" height="1" fill="#b53c00"/><rect x="-3" y="32" width="4" height="1" fill="#8b6100"/><rect x="1" y="32" width="1" height="1" fill="#7a6100"/><rect x="2" y="32" width="1" height="1" fill="#976100"/><rect x="3" y="32" width="1" height="1" fill="#696100"/><rect x="4" y="32" width="1" height="1" fill="#5e6100"/><rect x="5" y="32" width="1" height="1" fill="#6c6100"/><rect x="6" y="32" width="1" height="1" fill="#7a6100"/><rect x="7" y="32" width="1" height="1" fill="#a26100"/><rect x="8" y="32" width="1" height="1" fill="#846100"/><rect x="9" y="32" width="1" height="1" fill="#8b6100"/><rect x="10" y="32" width="1" height="1" fill="#8b5600"/><rect x="11" y="32" width="1" height="1" fill="#975600"/><rect x="12" y="32" width="1" height="1" fill="#945600"/><rect x="13" y="32" width="1" height="1" fill="#895600"/><rect x="14" y="32" width="1" height="1" fill="#925600"/><rect x="15" y="32" width="1" height="1" fill="#a25600"/><rect x="16" y="32" width="1" height="1" fill="#ae5600"/><rect x="17" y="32" width="1" height="1" fill="#9e5600"/><rect x="18" y="32" width="1" height="1" fill="#a55600"/><rect x="19" y="32" width="1" height="1" fill="#bc5600"/><rect x="20" y="32" width="1" height="1" fill="#b93c00"/><rect x="21" y="32" width="1" height="1" fill="#b33c00"/><rect x="22" y="32" width="1" height="1" fill="#b73c00"/><rect x="23" y="32" width="1" height="1" fill="#be3c00"/><rect x="24" y="32" width="3" height="1" fill="#e43c00"/><rect x="27" y="32" width="8" height="1" fill="#b53c00"/><rect x="-3" y="33" width="4" height="1" fill="#926100"/><rect x="1" y="33" width="1" height="1" fill="#906100"/><rect x="2" y="33" width="1" height="1" fill="#7a6100"/><rect x="3" y="33" width="1" height="1" fill="#896100"/><rect x="4" y="33" width="1" height="1" fill="#6c6100"/><rect x="5" y="33" width="1" height="1" fill="#866100"/><rect x="6" y="33" width="1" height="1" fill="#606100"/><rect x="7" y="33" width="1" height="1" fill="#7c6100"/><rect x="8" y="33" width="1" height="1" fill="#8d6100"/><rect x="9" y="33" width="1" height="1" fill="#926100"/><rect x="10" y="33" width="1" height="1" fill="#945600"/><rect x="11" y="33" width="2" height="1" fill="#975600"/><rect x="13" y="33" width="1" height="1" fill="#905600"/><rect x="14" y="33" width="1" height="1" fill="#a95600"/><rect x="15" y="33" width="1" height="1" fill="#b55600"/><rect x="16" y="33" width="2" height="1" fill="#975600"/><rect x="18" y="33" width="1" height="1" fill="#a05600"/><rect x="19" y="33" width="1" height="1" fill="#b35600"/><rect x="20" y="33" width="2" height="1" fill="#ae3c00"/><rect x="22" y="33" width="1" height="1" fill="#b53c00"/><rect x="23" y="33" width="1" height="1" fill="#be3c00"/><rect x="24" y="33" width="2" height="1" fill="#e43c00"/><rect x="26" y="33" width="9" height="1" fill="#b53c00"/><rect x="-3" y="34" width="4" height="1" fill="#896100"/><rect x="1" y="34" width="1" height="1" fill="#6c6100"/><rect x="2" y="34" width="1" height="1" fill="#596100"/><rect x="3" y="34" width="1" height="1" fill="#696100"/><rect x="4" y="34" width="1" height="1" fill="#896100"/><rect x="5" y="34" width="1" height="1" fill="#906100"/><rect x="6" y="34" width="1" height="1" fill="#8b6100"/><rect x="7" y="34" width="1" height="1" fill="#846100"/><rect x="8" y="34" width="1" height="1" fill="#7a6100"/><rect x="9" y="34" width="1" height="1" fill="#8b6100"/><rect x="10" y="34" width="1" height="1" fill="#a55600"/><rect x="11" y="34" width="1" height="1" fill="#8b3a00"/><rect x="12" y="34" width="1" height="1" fill="#923a00"/><rect x="13" y="34" width="1" height="1" fill="#8b3a00"/><rect x="14" y="34" width="1" height="1" fill="#973a00"/><rect x="15" y="34" width="1" height="1" fill="#8b3a00"/><rect x="16" y="34" width="1" height="1" fill="#a53a00"/><rect x="17" y="34" width="1" height="1" fill="#b55600"/><rect x="18" y="34" width="2" height="1" fill="#a95600"/><rect x="20" y="34" width="1" height="1" fill="#a73c00"/><rect x="21" y="34" width="1" height="1" fill="#b93c00"/><rect x="22" y="34" width="1" height="1" fill="#b73c00"/><rect x="23" y="34" width="1" height="1" fill="#a23c00"/><rect x="24" y="34" width="1" height="1" fill="#a93c00"/><rect x="25" y="34" width="10" height="1" fill="#b53c00"/><rect x="-3" y="35" width="4" height="1" fill="#656100"/><rect x="1" y="35" width="1" height="1" fill="#676100"/><rect x="2" y="35" width="1" height="1" fill="#866100"/><rect x="3" y="35" width="1" height="1" fill="#656100"/><rect x="4" y="35" width="1" height="1" fill="#926100"/><rect x="5" y="35" width="1" height="1" fill="#8d6100"/><rect x="6" y="35" width="1" height="1" fill="#8b6100"/><rect x="7" y="35" width="1" height="1" fill="#846100"/><rect x="8" y="35" width="1" height="1" fill="#7a6100"/><rect x="9" y="35" width="1" height="1" fill="#696100"/><rect x="10" y="35" width="1" height="1" fill="#805600"/><rect x="11" y="35" width="1" height="1" fill="#803a00"/><rect x="12" y="35" width="1" height="1" fill="#893a00"/><rect x="13" y="35" width="1" height="1" fill="#973a00"/><rect x="14" y="35" width="1" height="1" fill="#803a00"/><rect x="15" y="35" width="1" height="1" fill="#823a00"/><rect x="16" y="35" width="1" height="1" fill="#8d3a00"/><rect x="17" y="35" width="1" height="1" fill="#ca5600"/><rect x="18" y="35" width="1" height="1" fill="#dc5600"/><rect x="19" y="35" width="1" height="1" fill="#d15600"/><rect x="20" y="35" width="2" height="1" fill="#ae3c00"/><rect x="22" y="35" width="1" height="1" fill="#a93c00"/><rect x="23" y="35" width="1" height="1" fill="#a53c00"/><rect x="24" y="35" width="1" height="1" fill="#a93c00"/><rect x="25" y="35" width="6" height="1" fill="#b53c00"/><rect x="31" y="35" width="4" height="1" fill="#e43c00"/><rect x="-3" y="36" width="4" height="1" fill="#5e6100"/><rect x="1" y="36" width="1" height="1" fill="#696100"/><rect x="2" y="36" width="1" height="1" fill="#8b6100"/><rect x="3" y="36" width="1" height="1" fill="#606100"/><rect x="4" y="36" width="1" height="1" fill="#6c6100"/><rect x="5" y="36" width="1" height="1" fill="#656100"/><rect x="6" y="36" width="1" height="1" fill="#7a6100"/><rect x="7" y="36" width="1" height="1" fill="#846100"/><rect x="8" y="36" width="1" height="1" fill="#636100"/><rect x="9" y="36" width="1" height="1" fill="#6c6100"/><rect x="10" y="36" width="1" height="1" fill="#765600"/><rect x="11" y="36" width="1" height="1" fill="#7d3a00"/><rect x="12" y="36" width="1" height="1" fill="#863a00"/><rect x="13" y="36" width="1" height="1" fill="#843a00"/><rect x="14" y="36" width="1" height="1" fill="#863a00"/><rect x="15" y="36" width="1" height="1" fill="#8b3a00"/><rect x="16" y="36" width="1" height="1" fill="#c53a00"/><rect x="17" y="36" width="1" height="1" fill="#cc5600"/><rect x="18" y="36" width="1" height="1" fill="#ae5600"/><rect x="19" y="36" width="1" height="1" fill="#a95600"/><rect x="20" y="36" width="1" height="1" fill="#b93c00"/><rect x="21" y="36" width="1" height="1" fill="#ae3c00"/><rect x="22" y="36" width="1" height="1" fill="#a93c00"/><rect x="23" y="36" width="1" height="1" fill="#b73c00"/><rect x="24" y="36" width="1" height="1" fill="#a93c00"/><rect x="25" y="36" width="3" height="1" fill="#c33c00"/><rect x="28" y="36" width="7" height="1" fill="#e43c00"/><rect x="-3" y="37" width="4" height="1" fill="#656100"/><rect x="1" y="37" width="1" height="1" fill="#8b6100"/><rect x="2" y="37" width="1" height="1" fill="#656100"/><rect x="3" y="37" width="1" height="1" fill="#5e6100"/><rect x="4" y="37" width="1" height="1" fill="#576100"/><rect x="5" y="37" width="1" height="1" fill="#596100"/><rect x="6" y="37" width="1" height="1" fill="#576100"/><rect x="7" y="37" width="1" height="1" fill="#596100"/><rect x="8" y="37" width="1" height="1" fill="#636100"/><rect x="9" y="37" width="1" height="1" fill="#6c6100"/><rect x="10" y="37" width="1" height="1" fill="#7d5600"/><rect x="11" y="37" width="1" height="1" fill="#8b3a00"/><rect x="12" y="37" width="1" height="1" fill="#6d3a00"/><rect x="13" y="37" width="1" height="1" fill="#803a00"/><rect x="14" y="37" width="1" height="1" fill="#973a00"/><rect x="15" y="37" width="1" height="1" fill="#d13a00"/><rect x="16" y="37" width="1" height="1" fill="#c03a00"/><rect x="17" y="37" width="1" height="1" fill="#c55600"/><rect x="18" y="37" width="1" height="1" fill="#b35600"/><rect x="19" y="37" width="1" height="1" fill="#a95600"/><rect x="20" y="37" width="1" height="1" fill="#972a00"/><rect x="21" y="37" width="1" height="1" fill="#9e2a00"/><rect x="22" y="37" width="1" height="1" fill="#a72a00"/><rect x="23" y="37" width="1" height="1" fill="#a92a00"/><rect x="24" y="37" width="1" height="1" fill="#b33c00"/><rect x="25" y="37" width="2" height="1" fill="#c73c00"/><rect x="27" y="37" width="8" height="1" fill="#e43c00"/><rect x="-3" y="38" width="4" height="1" fill="#4e6100"/><rect x="1" y="38" width="1" height="1" fill="#7a6100"/><rect x="2" y="38" width="1" height="1" fill="#6c6100"/><rect x="3" y="38" width="1" height="1" fill="#606100"/><rect x="4" y="38" width="2" height="1" fill="#596100"/><rect x="6" y="38" width="1" height="1" fill="#5e6100"/><rect x="7" y="38" width="1" height="1" fill="#596100"/><rect x="8" y="38" width="1" height="1" fill="#656100"/><rect x="9" y="38" width="1" height="1" fill="#6c6100"/><rect x="10" y="38" width="1" height="1" fill="#8b5600"/><rect x="11" y="38" width="1" height="1" fill="#7d3a00"/><rect x="12" y="38" width="1" height="1" fill="#723a00"/><rect x="13" y="38" width="1" height="1" fill="#823a00"/><rect x="14" y="38" width="1" height="1" fill="#cc3a00"/><rect x="15" y="38" width="1" height="1" fill="#943a00"/><rect x="16" y="38" width="1" height="1" fill="#c53a00"/><rect x="17" y="38" width="1" height="1" fill="#d35600"/><rect x="18" y="38" width="1" height="1" fill="#b75600"/><rect x="19" y="38" width="1" height="1" fill="#a55600"/><rect x="20" y="38" width="1" height="1" fill="#972a00"/><rect x="21" y="38" width="2" height="1" fill="#942a00"/><rect x="23" y="38" width="1" height="1" fill="#9e2a00"/><rect x="24" y="38" width="1" height="1" fill="#a93c00"/><rect x="25" y="38" width="1" height="1" fill="#c03c00"/><rect x="26" y="38" width="9" height="1" fill="#e43c00"/><rect x="-3" y="39" width="4" height="1" fill="#556100"/><rect x="1" y="39" width="1" height="1" fill="#6e6100"/><rect x="2" y="39" width="1" height="1" fill="#866100"/><rect x="3" y="39" width="1" height="1" fill="#606100"/><rect x="4" y="39" width="1" height="1" fill="#6c6100"/><rect x="5" y="39" width="1" height="1" fill="#6e6100"/><rect x="6" y="39" width="1" height="1" fill="#8b6100"/><rect x="7" y="39" width="1" height="1" fill="#9b6100"/><rect x="8" y="39" width="1" height="1" fill="#906100"/><rect x="9" y="39" width="1" height="1" fill="#b96100"/><rect x="10" y="39" width="1" height="1" fill="#6d5600"/><rect x="11" y="39" width="1" height="1" fill="#7b3a00"/><rect x="12" y="39" width="1" height="1" fill="#793a00"/><rect x="13" y="39" width="1" height="1" fill="#a93a00"/><rect x="14" y="39" width="1" height="1" fill="#b33a00"/><rect x="15" y="39" width="1" height="1" fill="#7d3a00"/><rect x="16" y="39" width="1" height="1" fill="#803a00"/><rect x="17" y="39" width="1" height="1" fill="#925600"/><rect x="18" y="39" width="1" height="1" fill="#a05600"/><rect x="19" y="39" width="1" height="1" fill="#a55600"/><rect x="20" y="39" width="1" height="1" fill="#a52a00"/><rect x="21" y="39" width="2" height="1" fill="#8d2a00"/><rect x="23" y="39" width="1" height="1" fill="#972a00"/><rect x="24" y="39" width="1" height="1" fill="#a93c00"/><rect x="25" y="39" width="1" height="1" fill="#ac3c00"/><rect x="26" y="39" width="9" height="1" fill="#c53c00"/><rect x="-3" y="40" width="4" height="1" fill="#976100"/><rect x="1" y="40" width="1" height="1" fill="#9e6100"/><rect x="2" y="40" width="1" height="1" fill="#806100"/><rect x="3" y="40" width="1" height="1" fill="#8b6100"/><rect x="4" y="40" width="1" height="1" fill="#7b6100"/><rect x="5" y="40" width="1" height="1" fill="#6d6100"/><rect x="6" y="40" width="1" height="1" fill="#8b6100"/><rect x="7" y="40" width="1" height="1" fill="#8d6100"/><rect x="8" y="40" width="1" height="1" fill="#806100"/><rect x="9" y="40" width="1" height="1" fill="#9e6100"/><rect x="10" y="40" width="1" height="1" fill="#975600"/><rect x="11" y="40" width="1" height="1" fill="#845600"/><rect x="12" y="40" width="2" height="1" fill="#a95600"/><rect x="14" y="40" width="2" height="1" fill="#a55600"/><rect x="16" y="40" width="1" height="1" fill="#852500"/><rect x="17" y="40" width="1" height="1" fill="#7e2500"/><rect x="18" y="40" width="1" height="1" fill="#832500"/><rect x="19" y="40" width="1" height="1" fill="#8c2500"/><rect x="20" y="40" width="1" height="1" fill="#a93c00"/><rect x="21" y="40" width="1" height="1" fill="#973c00"/><rect x="22" y="40" width="1" height="1" fill="#923c00"/><rect x="23" y="40" width="1" height="1" fill="#9b3c00"/><rect x="24" y="40" width="1" height="1" fill="#9e3c00"/><rect x="25" y="40" width="1" height="1" fill="#a93c00"/><rect x="26" y="40" width="9" height="1" fill="#bc3c00"/><rect x="-3" y="41" width="4" height="1" fill="#ae5600"/><rect x="1" y="41" width="1" height="1" fill="#a95600"/><rect x="2" y="41" width="1" height="1" fill="#805600"/><rect x="3" y="41" width="1" height="1" fill="#685600"/><rect x="4" y="41" width="1" height="1" fill="#765600"/><rect x="5" y="41" width="1" height="1" fill="#7b5600"/><rect x="6" y="41" width="1" height="1" fill="#8d5600"/><rect x="7" y="41" width="1" height="1" fill="#ae5600"/><rect x="8" y="41" width="1" height="1" fill="#805600"/><rect x="9" y="41" width="1" height="1" fill="#845600"/><rect x="10" y="41" width="1" height="1" fill="#805600"/><rect x="11" y="41" width="1" height="1" fill="#905600"/><rect x="12" y="41" width="1" height="1" fill="#a25600"/><rect x="13" y="41" width="1" height="1" fill="#975600"/><rect x="14" y="41" width="1" height="1" fill="#b95600"/><rect x="15" y="41" width="1" height="1" fill="#9b5600"/><rect x="16" y="41" width="1" height="1" fill="#832500"/><rect x="17" y="41" width="2" height="1" fill="#7e2500"/><rect x="19" y="41" width="1" height="1" fill="#882500"/><rect x="20" y="41" width="1" height="1" fill="#9b3c00"/><rect x="21" y="41" width="1" height="1" fill="#a03c00"/><rect x="22" y="41" width="2" height="1" fill="#9b3c00"/><rect x="24" y="41" width="1" height="1" fill="#9e3c00"/><rect x="25" y="41" width="1" height="1" fill="#a93c00"/><rect x="26" y="41" width="3" height="1" fill="#bc3c00"/><rect x="29" y="41" width="6" height="1" fill="#c73c00"/><rect x="-3" y="42" width="4" height="1" fill="#c05600"/><rect x="1" y="42" width="1" height="1" fill="#b35600"/><rect x="2" y="42" width="1" height="1" fill="#975600"/><rect x="3" y="42" width="1" height="1" fill="#805600"/><rect x="4" y="42" width="1" height="1" fill="#8b5600"/><rect x="5" y="42" width="1" height="1" fill="#9b5600"/><rect x="6" y="42" width="1" height="1" fill="#765600"/><rect x="7" y="42" width="1" height="1" fill="#8d5600"/><rect x="8" y="42" width="1" height="1" fill="#9b5600"/><rect x="9" y="42" width="1" height="1" fill="#805600"/><rect x="10" y="42" width="1" height="1" fill="#8d5600"/><rect x="11" y="42" width="1" height="1" fill="#7b5600"/><rect x="12" y="42" width="1" height="1" fill="#905600"/><rect x="13" y="42" width="1" height="1" fill="#b55600"/><rect x="14" y="42" width="1" height="1" fill="#b95600"/><rect x="15" y="42" width="1" height="1" fill="#8b5600"/><rect x="16" y="42" width="1" height="1" fill="#8a2500"/><rect x="17" y="42" width="2" height="1" fill="#832500"/><rect x="19" y="42" width="1" height="1" fill="#8a2500"/><rect x="20" y="42" width="1" height="1" fill="#973c00"/><rect x="21" y="42" width="4" height="1" fill="#9e3c00"/><rect x="25" y="42" width="1" height="1" fill="#a93c00"/><rect x="26" y="42" width="2" height="1" fill="#c03c00"/><rect x="28" y="42" width="7" height="1" fill="#c73c00"/><rect x="-3" y="43" width="4" height="1" fill="#b95600"/><rect x="1" y="43" width="1" height="1" fill="#ae5600"/><rect x="2" y="43" width="1" height="1" fill="#925600"/><rect x="3" y="43" width="2" height="1" fill="#8d5600"/><rect x="5" y="43" width="1" height="1" fill="#8b5600"/><rect x="6" y="43" width="1" height="1" fill="#685600"/><rect x="7" y="43" width="1" height="1" fill="#6d5600"/><rect x="8" y="43" width="1" height="1" fill="#725600"/><rect x="9" y="43" width="1" height="1" fill="#6f5600"/><rect x="10" y="43" width="1" height="1" fill="#6d5600"/><rect x="11" y="43" width="1" height="1" fill="#765600"/><rect x="12" y="43" width="1" height="1" fill="#8d5600"/><rect x="13" y="43" width="1" height="1" fill="#ae5600"/><rect x="14" y="43" width="1" height="1" fill="#a25600"/><rect x="15" y="43" width="1" height="1" fill="#8b5600"/><rect x="16" y="43" width="1" height="1" fill="#892500"/><rect x="17" y="43" width="1" height="1" fill="#8d2500"/><rect x="18" y="43" width="1" height="1" fill="#a02500"/><rect x="19" y="43" width="1" height="1" fill="#a92500"/><rect x="20" y="43" width="1" height="1" fill="#973c00"/><rect x="21" y="43" width="1" height="1" fill="#a23c00"/><rect x="22" y="43" width="1" height="1" fill="#9e3c00"/><rect x="23" y="43" width="1" height="1" fill="#a73c00"/><rect x="24" y="43" width="1" height="1" fill="#9e3c00"/><rect x="25" y="43" width="1" height="1" fill="#a93c00"/><rect x="26" y="43" width="1" height="1" fill="#b93c00"/><rect x="27" y="43" width="8" height="1" fill="#c73c00"/><rect x="-3" y="44" width="4" height="1" fill="#a25600"/><rect x="1" y="44" width="1" height="1" fill="#b95600"/><rect x="2" y="44" width="1" height="1" fill="#c55600"/><rect x="3" y="44" width="1" height="1" fill="#a25600"/><rect x="4" y="44" width="1" height="1" fill="#7b5600"/><rect x="5" y="44" width="1" height="1" fill="#6f5600"/><rect x="6" y="44" width="1" height="1" fill="#895600"/><rect x="7" y="44" width="1" height="1" fill="#845600"/><rect x="8" y="44" width="1" height="1" fill="#805600"/><rect x="9" y="44" width="1" height="1" fill="#765600"/><rect x="10" y="44" width="1" height="1" fill="#845600"/><rect x="11" y="44" width="1" height="1" fill="#8d5600"/><rect x="12" y="44" width="1" height="1" fill="#845600"/><rect x="13" y="44" width="1" height="1" fill="#8b5600"/><rect x="14" y="44" width="1" height="1" fill="#905600"/><rect x="15" y="44" width="1" height="1" fill="#925600"/><rect x="16" y="44" width="1" height="1" fill="#9e5600"/><rect x="17" y="44" width="1" height="1" fill="#a25600"/><rect x="18" y="44" width="1" height="1" fill="#a75600"/><rect x="19" y="44" width="1" height="1" fill="#a95600"/><rect x="20" y="44" width="1" height="1" fill="#ae3c00"/><rect x="21" y="44" width="1" height="1" fill="#b33c00"/><rect x="22" y="44" width="1" height="1" fill="#ae3c00"/><rect x="23" y="44" width="1" height="1" fill="#a93c00"/><rect x="24" y="44" width="1" height="1" fill="#b33c00"/><rect x="25" y="44" width="1" height="1" fill="#a73c00"/><rect x="26" y="44" width="1" height="1" fill="#a23c00"/><rect x="27" y="44" width="8" height="1" fill="#c73c00"/><rect x="-3" y="45" width="4" height="1" fill="#745600"/><rect x="1" y="45" width="1" height="1" fill="#6d5600"/><rect x="2" y="45" width="1" height="1" fill="#c55600"/><rect x="3" y="45" width="1" height="1" fill="#c05600"/><rect x="4" y="45" width="1" height="1" fill="#ae5600"/><rect x="5" y="45" width="1" height="1" fill="#a95600"/><rect x="6" y="45" width="1" height="1" fill="#c05600"/><rect x="7" y="45" width="1" height="1" fill="#a95600"/><rect x="8" y="45" width="1" height="1" fill="#8d5600"/><rect x="9" y="45" width="1" height="1" fill="#845600"/><rect x="10" y="45" width="1" height="1" fill="#805600"/><rect x="11" y="45" width="1" height="1" fill="#905600"/><rect x="12" y="45" width="1" height="1" fill="#725600"/><rect x="13" y="45" width="1" height="1" fill="#765600"/><rect x="14" y="45" width="1" height="1" fill="#8b5600"/><rect x="15" y="45" width="1" height="1" fill="#925600"/><rect x="16" y="45" width="1" height="1" fill="#9e5600"/><rect x="17" y="45" width="1" height="1" fill="#a95600"/><rect x="18" y="45" width="1" height="1" fill="#a55600"/><rect x="19" y="45" width="1" height="1" fill="#a05600"/><rect x="20" y="45" width="2" height="1" fill="#a93c00"/><rect x="22" y="45" width="1" height="1" fill="#b33c00"/><rect x="23" y="45" width="1" height="1" fill="#b93c00"/><rect x="24" y="45" width="1" height="1" fill="#ca3c00"/><rect x="25" y="45" width="1" height="1" fill="#b73c00"/><rect x="26" y="45" width="1" height="1" fill="#ae3c00"/><rect x="27" y="45" width="8" height="1" fill="#e43c00"/><rect x="-3" y="46" width="4" height="1" fill="#645600"/><rect x="1" y="46" width="1" height="1" fill="#8b5600"/><rect x="2" y="46" width="2" height="1" fill="#ae5600"/><rect x="4" y="46" width="1" height="1" fill="#b55600"/><rect x="5" y="46" width="1" height="1" fill="#a95600"/><rect x="6" y="46" width="1" height="1" fill="#b75600"/><rect x="7" y="46" width="1" height="1" fill="#bc5600"/><rect x="8" y="46" width="1" height="1" fill="#9b5600"/><rect x="9" y="46" width="1" height="1" fill="#ae5600"/><rect x="10" y="46" width="1" height="1" fill="#975600"/><rect x="11" y="46" width="1" height="1" fill="#9e5600"/><rect x="12" y="46" width="1" height="1" fill="#925600"/><rect x="13" y="46" width="2" height="1" fill="#8b5600"/><rect x="15" y="46" width="1" height="1" fill="#845600"/><rect x="16" y="46" width="1" height="1" fill="#905600"/><rect x="17" y="46" width="1" height="1" fill="#975600"/><rect x="18" y="46" width="2" height="1" fill="#9e5600"/><rect x="20" y="46" width="2" height="1" fill="#a73c00"/><rect x="22" y="46" width="1" height="1" fill="#ae3c00"/><rect x="23" y="46" width="1" height="1" fill="#b53c00"/><rect x="24" y="46" width="1" height="1" fill="#c53c00"/><rect x="25" y="46" width="1" height="1" fill="#c03c00"/><rect x="26" y="46" width="1" height="1" fill="#b53c00"/><rect x="27" y="46" width="8" height="1" fill="#e43c00"/><rect x="-3" y="47" width="4" height="1" fill="#585600"/><rect x="1" y="47" width="1" height="1" fill="#8b5600"/><rect x="2" y="47" width="1" height="1" fill="#b75600"/><rect x="3" y="47" width="1" height="1" fill="#a95600"/><rect x="4" y="47" width="1" height="1" fill="#b95600"/><rect x="5" y="47" width="1" height="1" fill="#a95600"/><rect x="6" y="47" width="1" height="1" fill="#805600"/><rect x="7" y="47" width="1" height="1" fill="#cc5600"/><rect x="8" y="47" width="1" height="1" fill="#c05600"/><rect x="9" y="47" width="1" height="1" fill="#845600"/><rect x="10" y="47" width="1" height="1" fill="#c55600"/><rect x="11" y="47" width="1" height="1" fill="#bc5600"/><rect x="12" y="47" width="1" height="1" fill="#c55600"/><rect x="13" y="47" width="1" height="1" fill="#a95600"/><rect x="14" y="47" width="2" height="1" fill="#b55600"/><rect x="16" y="47" width="1" height="1" fill="#975600"/><rect x="17" y="47" width="1" height="1" fill="#8b5600"/><rect x="18" y="47" width="1" height="1" fill="#a95600"/><rect x="19" y="47" width="1" height="1" fill="#c55600"/><rect x="20" y="47" width="1" height="1" fill="#c03c00"/><rect x="21" y="47" width="1" height="1" fill="#b93c00"/><rect x="22" y="47" width="1" height="1" fill="#973c00"/><rect x="23" y="47" width="1" height="1" fill="#923c00"/><rect x="24" y="47" width="1" height="1" fill="#a93c00"/><rect x="25" y="47" width="1" height="1" fill="#b53c00"/><rect x="26" y="47" width="1" height="1" fill="#c53c00"/><rect x="27" y="47" width="1" height="1" fill="#ce3c00"/><rect x="28" y="47" width="7" height="1" fill="#e43c00"/><rect x="-3" y="48" width="4" height="1" fill="#685600"/><rect x="1" y="48" width="1" height="1" fill="#725600"/><rect x="2" y="48" width="1" height="1" fill="#b35600"/><rect x="3" y="48" width="1" height="1" fill="#a55600"/><rect x="4" y="48" width="1" height="1" fill="#b95600"/><rect x="5" y="48" width="1" height="1" fill="#a95600"/><rect x="6" y="48" width="1" height="1" fill="#805600"/><rect x="7" y="48" width="1" height="1" fill="#8d5600"/><rect x="8" y="48" width="1" height="1" fill="#745600"/><rect x="9" y="48" width="1" height="1" fill="#8d5600"/><rect x="10" y="48" width="1" height="1" fill="#b55600"/><rect x="11" y="48" width="1" height="1" fill="#a95600"/><rect x="12" y="48" width="1" height="1" fill="#9b5600"/><rect x="13" y="48" width="1" height="1" fill="#975600"/><rect x="14" y="48" width="1" height="1" fill="#c05600"/><rect x="15" y="48" width="1" height="1" fill="#a95600"/><rect x="16" y="48" width="1" height="1" fill="#ae5600"/><rect x="17" y="48" width="1" height="1" fill="#b55600"/><rect x="18" y="48" width="2" height="1" fill="#a55600"/><rect x="20" y="48" width="1" height="1" fill="#a93c00"/><rect x="21" y="48" width="1" height="1" fill="#b93c00"/><rect x="22" y="48" width="1" height="1" fill="#b73c00"/><rect x="23" y="48" width="1" height="1" fill="#a23c00"/><rect x="24" y="48" width="1" height="1" fill="#b53c00"/><rect x="25" y="48" width="1" height="1" fill="#b93c00"/><rect x="26" y="48" width="1" height="1" fill="#c53c00"/><rect x="27" y="48" width="1" height="1" fill="#dc3c00"/><rect x="28" y="48" width="7" height="1" fill="#e43c00"/><rect x="-3" y="49" width="5" height="1" fill="#6d5600"/><rect x="2" y="49" width="1" height="1" fill="#925600"/><rect x="3" y="49" width="1" height="1" fill="#a25600"/><rect x="4" y="49" width="1" height="1" fill="#805600"/><rect x="5" y="49" width="1" height="1" fill="#b55600"/><rect x="6" y="49" width="1" height="1" fill="#a25600"/><rect x="7" y="49" width="1" height="1" fill="#8d5600"/><rect x="8" y="49" width="1" height="1" fill="#a95600"/><rect x="9" y="49" width="2" height="1" fill="#905600"/><rect x="11" y="49" width="1" height="1" fill="#b35600"/><rect x="12" y="49" width="1" height="1" fill="#a95600"/><rect x="13" y="49" width="1" height="1" fill="#925600"/><rect x="14" y="49" width="1" height="1" fill="#905600"/><rect x="15" y="49" width="1" height="1" fill="#865600"/><rect x="16" y="49" width="1" height="1" fill="#9e5600"/><rect x="17" y="49" width="1" height="1" fill="#a95600"/><rect x="18" y="49" width="1" height="1" fill="#a75600"/><rect x="19" y="49" width="1" height="1" fill="#a95600"/><rect x="20" y="49" width="1" height="1" fill="#b93c00"/><rect x="21" y="49" width="1" height="1" fill="#9b3c00"/><rect x="22" y="49" width="1" height="1" fill="#a93c00"/><rect x="23" y="49" width="1" height="1" fill="#a73c00"/><rect x="24" y="49" width="1" height="1" fill="#b53c00"/><rect x="25" y="49" width="1" height="1" fill="#b93c00"/><rect x="26" y="49" width="1" height="1" fill="#c53c00"/><rect x="27" y="49" width="1" height="1" fill="#dc3c00"/><rect x="28" y="49" width="7" height="1" fill="#e43c00"/><rect x="-3" y="50" width="4" height="1" fill="#641500"/><rect x="1" y="50" width="2" height="1" fill="#461500"/><rect x="3" y="50" width="1" height="1" fill="#561500"/><rect x="4" y="50" width="1" height="1" fill="#6d1500"/><rect x="5" y="50" width="1" height="1" fill="#581500"/><rect x="6" y="50" width="1" height="1" fill="#5d1500"/><rect x="7" y="50" width="1" height="1" fill="#681500"/><rect x="8" y="50" width="1" height="1" fill="#6d1500"/><rect x="9" y="50" width="1" height="1" fill="#6b1500"/><rect x="10" y="50" width="1" height="1" fill="#6d1000"/><rect x="11" y="50" width="1" height="1" fill="#661000"/><rect x="12" y="50" width="1" height="1" fill="#6f1000"/><rect x="13" y="50" width="1" height="1" fill="#801000"/><rect x="14" y="50" width="1" height="1" fill="#6d1000"/><rect x="15" y="50" width="1" height="1" fill="#801000"/><rect x="16" y="50" width="1" height="1" fill="#971000"/><rect x="17" y="50" width="2" height="1" fill="#b51700"/><rect x="19" y="50" width="1" height="1" fill="#a21700"/><rect x="20" y="50" width="1" height="1" fill="#972a00"/><rect x="21" y="50" width="2" height="1" fill="#a72a00"/><rect x="23" y="50" width="1" height="1" fill="#a92a00"/><rect x="24" y="50" width="1" height="1" fill="#b32a00"/><rect x="25" y="50" width="1" height="1" fill="#b92a00"/><rect x="26" y="50" width="1" height="1" fill="#cc2a00"/><rect x="27" y="50" width="1" height="1" fill="#d12a00"/><rect x="28" y="50" width="7" height="1" fill="#e42a00"/><rect x="-3" y="51" width="5" height="1" fill="#461500"/><rect x="2" y="51" width="1" height="1" fill="#4a1500"/><rect x="3" y="51" width="1" height="1" fill="#641500"/><rect x="4" y="51" width="1" height="1" fill="#7b1500"/><rect x="5" y="51" width="1" height="1" fill="#4c1500"/><rect x="6" y="51" width="1" height="1" fill="#481500"/><rect x="7" y="51" width="1" height="1" fill="#5a1500"/><rect x="8" y="51" width="1" height="1" fill="#6d1500"/><rect x="9" y="51" width="1" height="1" fill="#6b1500"/><rect x="10" y="51" width="3" height="1" fill="#681000"/><rect x="13" y="51" width="1" height="1" fill="#6b1000"/><rect x="14" y="51" width="1" height="1" fill="#721000"/><rect x="15" y="51" width="1" height="1" fill="#6f1000"/><rect x="16" y="51" width="1" height="1" fill="#891000"/><rect x="17" y="51" width="3" height="1" fill="#7e1700"/><rect x="20" y="51" width="1" height="1" fill="#842a00"/><rect x="21" y="51" width="1" height="1" fill="#a52a00"/><rect x="22" y="51" width="1" height="1" fill="#a02a00"/><rect x="23" y="51" width="1" height="1" fill="#a72a00"/><rect x="24" y="51" width="1" height="1" fill="#ae2a00"/><rect x="25" y="51" width="2" height="1" fill="#b92a00"/><rect x="27" y="51" width="1" height="1" fill="#c02a00"/><rect x="28" y="51" width="1" height="1" fill="#d12a00"/><rect x="29" y="51" width="6" height="1" fill="#e42a00"/><rect x="-3" y="52" width="4" height="1" fill="#461500"/><rect x="1" y="52" width="1" height="1" fill="#481500"/><rect x="2" y="52" width="1" height="1" fill="#461500"/><rect x="3" y="52" width="1" height="1" fill="#4c1500"/><rect x="4" y="52" width="1" height="1" fill="#5d1500"/><rect x="5" y="52" width="1" height="1" fill="#511500"/><rect x="6" y="52" width="1" height="1" fill="#5a1500"/><rect x="7" y="52" width="1" height="1" fill="#6d1500"/><rect x="8" y="52" width="1" height="1" fill="#741500"/><rect x="9" y="52" width="1" height="1" fill="#6d1500"/><rect x="10" y="52" width="4" height="1" fill="#681000"/><rect x="14" y="52" width="1" height="1" fill="#6f1000"/><rect x="15" y="52" width="1" height="1" fill="#6d1000"/><rect x="16" y="52" width="1" height="1" fill="#721000"/><rect x="17" y="52" width="3" height="1" fill="#7e1700"/><rect x="20" y="52" width="1" height="1" fill="#842a00"/><rect x="21" y="52" width="2" height="1" fill="#9e2a00"/><rect x="23" y="52" width="1" height="1" fill="#972a00"/><rect x="24" y="52" width="1" height="1" fill="#9e2a00"/><rect x="25" y="52" width="1" height="1" fill="#ac2a00"/><rect x="26" y="52" width="1" height="1" fill="#b52a00"/><rect x="27" y="52" width="1" height="1" fill="#ae2a00"/><rect x="28" y="52" width="1" height="1" fill="#c02a00"/><rect x="29" y="52" width="6" height="1" fill="#e42a00"/><rect x="-3" y="53" width="4" height="1" fill="#4a1500"/><rect x="1" y="53" width="1" height="1" fill="#581500"/><rect x="2" y="53" width="1" height="1" fill="#481500"/><rect x="3" y="53" width="1" height="1" fill="#4f1500"/><rect x="4" y="53" width="1" height="1" fill="#4c1500"/><rect x="5" y="53" width="2" height="1" fill="#511500"/><rect x="7" y="53" width="1" height="1" fill="#5d1500"/><rect x="8" y="53" width="1" height="1" fill="#641500"/><rect x="9" y="53" width="1" height="1" fill="#581500"/><rect x="10" y="53" width="2" height="1" fill="#681000"/><rect x="12" y="53" width="1" height="1" fill="#6b1000"/><rect x="13" y="53" width="2" height="1" fill="#681000"/><rect x="15" y="53" width="2" height="1" fill="#6b1000"/><rect x="17" y="53" width="3" height="1" fill="#7e1700"/><rect x="20" y="53" width="1" height="1" fill="#822a00"/><rect x="21" y="53" width="1" height="1" fill="#922a00"/><rect x="22" y="53" width="1" height="1" fill="#9b2a00"/><rect x="23" y="53" width="1" height="1" fill="#942a00"/><rect x="24" y="53" width="1" height="1" fill="#9b2a00"/><rect x="25" y="53" width="1" height="1" fill="#a72a00"/><rect x="26" y="53" width="1" height="1" fill="#b52a00"/><rect x="27" y="53" width="1" height="1" fill="#b92a00"/><rect x="28" y="53" width="1" height="1" fill="#b72a00"/><rect x="29" y="53" width="6" height="1" fill="#c02a00"/><rect x="-3" y="54" width="4" height="1" fill="#5d1500"/><rect x="1" y="54" width="1" height="1" fill="#681500"/><rect x="2" y="54" width="3" height="1" fill="#481500"/><rect x="5" y="54" width="1" height="1" fill="#5d1500"/><rect x="6" y="54" width="1" height="1" fill="#6f1500"/><rect x="7" y="54" width="1" height="1" fill="#761500"/><rect x="8" y="54" width="1" height="1" fill="#8b1500"/><rect x="9" y="54" width="1" height="1" fill="#971500"/><rect x="10" y="54" width="1" height="1" fill="#741000"/><rect x="11" y="54" width="1" height="1" fill="#661000"/><rect x="12" y="54" width="1" height="1" fill="#681000"/><rect x="13" y="54" width="1" height="1" fill="#6b1000"/><rect x="14" y="54" width="2" height="1" fill="#681000"/><rect x="16" y="54" width="1" height="1" fill="#6b1000"/><rect x="17" y="54" width="3" height="1" fill="#7e1700"/><rect x="20" y="54" width="1" height="1" fill="#822a00"/><rect x="21" y="54" width="1" height="1" fill="#8b2a00"/><rect x="22" y="54" width="1" height="1" fill="#902a00"/><rect x="23" y="54" width="2" height="1" fill="#922a00"/><rect x="25" y="54" width="1" height="1" fill="#902a00"/><rect x="26" y="54" width="1" height="1" fill="#992a00"/><rect x="27" y="54" width="1" height="1" fill="#a02a00"/><rect x="28" y="54" width="1" height="1" fill="#a92a00"/><rect x="29" y="54" width="2" height="1" fill="#cc2a00"/><rect x="31" y="54" width="4" height="1" fill="#b52a00"/><rect x="-3" y="55" width="4" height="1" fill="#511500"/><rect x="1" y="55" width="1" height="1" fill="#481500"/><rect x="2" y="55" width="1" height="1" fill="#4f1500"/><rect x="3" y="55" width="1" height="1" fill="#581500"/><rect x="4" y="55" width="1" height="1" fill="#4c1500"/><rect x="5" y="55" width="2" height="1" fill="#481500"/><rect x="7" y="55" width="1" height="1" fill="#561500"/><rect x="8" y="55" width="1" height="1" fill="#761500"/><rect x="9" y="55" width="1" height="1" fill="#801500"/><rect x="10" y="55" width="1" height="1" fill="#802500"/><rect x="11" y="55" width="1" height="1" fill="#7b2500"/><rect x="12" y="55" width="1" height="1" fill="#722500"/><rect x="13" y="55" width="1" height="1" fill="#742500"/><rect x="14" y="55" width="1" height="1" fill="#722500"/><rect x="15" y="55" width="1" height="1" fill="#792500"/><rect x="16" y="55" width="1" height="1" fill="#6b1000"/><rect x="17" y="55" width="3" height="1" fill="#7e1700"/><rect x="20" y="55" width="1" height="1" fill="#822a00"/><rect x="21" y="55" width="1" height="1" fill="#a52a00"/><rect x="22" y="55" width="1" height="1" fill="#a92a00"/><rect x="23" y="55" width="1" height="1" fill="#972a00"/><rect x="24" y="55" width="1" height="1" fill="#9e2a00"/><rect x="25" y="55" width="1" height="1" fill="#a52a00"/><rect x="26" y="55" width="2" height="1" fill="#992a00"/><rect x="28" y="55" width="1" height="1" fill="#a72a00"/><rect x="29" y="55" width="1" height="1" fill="#b32a00"/><rect x="30" y="55" width="5" height="1" fill="#b52a00"/><rect x="-3" y="56" width="4" height="1" fill="#511500"/><rect x="1" y="56" width="7" height="1" fill="#461500"/><rect x="8" y="56" width="1" height="1" fill="#561500"/><rect x="9" y="56" width="1" height="1" fill="#6d1500"/><rect x="10" y="56" width="1" height="1" fill="#6f2500"/><rect x="11" y="56" width="1" height="1" fill="#802500"/><rect x="12" y="56" width="1" height="1" fill="#6d2500"/><rect x="13" y="56" width="1" height="1" fill="#722500"/><rect x="14" y="56" width="1" height="1" fill="#7d2500"/><rect x="15" y="56" width="1" height="1" fill="#842500"/><rect x="16" y="56" width="1" height="1" fill="#6d1000"/><rect x="17" y="56" width="1" height="1" fill="#6b1700"/><rect x="18" y="56" width="2" height="1" fill="#7e1700"/><rect x="20" y="56" width="1" height="1" fill="#842a00"/><rect x="21" y="56" width="1" height="1" fill="#ae2a00"/><rect x="22" y="56" width="1" height="1" fill="#a92a00"/><rect x="23" y="56" width="1" height="1" fill="#972a00"/><rect x="24" y="56" width="1" height="1" fill="#9e2a00"/><rect x="25" y="56" width="1" height="1" fill="#a52a00"/><rect x="26" y="56" width="2" height="1" fill="#992a00"/><rect x="28" y="56" width="1" height="1" fill="#a72a00"/><rect x="29" y="56" width="6" height="1" fill="#ac2a00"/><rect x="-3" y="57" width="12" height="1" fill="#461500"/><rect x="9" y="57" width="1" height="1" fill="#4c1500"/><rect x="10" y="57" width="1" height="1" fill="#762500"/><rect x="11" y="57" width="1" height="1" fill="#802500"/><rect x="12" y="57" width="1" height="1" fill="#6d2500"/><rect x="13" y="57" width="1" height="1" fill="#722500"/><rect x="14" y="57" width="1" height="1" fill="#7d2500"/><rect x="15" y="57" width="1" height="1" fill="#842500"/><rect x="16" y="57" width="1" height="1" fill="#6d1000"/><rect x="17" y="57" width="1" height="1" fill="#6b1700"/><rect x="18" y="57" width="2" height="1" fill="#7e1700"/><rect x="20" y="57" width="1" height="1" fill="#842a00"/><rect x="21" y="57" width="1" height="1" fill="#ae2a00"/><rect x="22" y="57" width="1" height="1" fill="#a92a00"/><rect x="23" y="57" width="1" height="1" fill="#972a00"/><rect x="24" y="57" width="1" height="1" fill="#9e2a00"/><rect x="25" y="57" width="1" height="1" fill="#a52a00"/><rect x="26" y="57" width="2" height="1" fill="#992a00"/><rect x="28" y="57" width="1" height="1" fill="#a72a00"/><rect x="29" y="57" width="6" height="1" fill="#ac2a00"/><rect x="-3" y="58" width="12" height="1" fill="#461500"/><rect x="9" y="58" width="1" height="1" fill="#4c1500"/><rect x="10" y="58" width="1" height="1" fill="#762500"/><rect x="11" y="58" width="1" height="1" fill="#802500"/><rect x="12" y="58" width="1" height="1" fill="#6d2500"/><rect x="13" y="58" width="1" height="1" fill="#722500"/><rect x="14" y="58" width="1" height="1" fill="#7d2500"/><rect x="15" y="58" width="1" height="1" fill="#842500"/><rect x="16" y="58" width="1" height="1" fill="#6d1000"/><rect x="17" y="58" width="1" height="1" fill="#6b1700"/><rect x="18" y="58" width="2" height="1" fill="#7e1700"/><rect x="20" y="58" width="1" height="1" fill="#842a00"/><rect x="21" y="58" width="1" height="1" fill="#ae2a00"/><rect x="22" y="58" width="1" height="1" fill="#a92a00"/><rect x="23" y="58" width="1" height="1" fill="#972a00"/><rect x="24" y="58" width="1" height="1" fill="#9e2a00"/><rect x="25" y="58" width="1" height="1" fill="#a52a00"/><rect x="26" y="58" width="2" height="1" fill="#992a00"/><rect x="28" y="58" width="1" height="1" fill="#a72a00"/><rect x="29" y="58" width="6" height="1" fill="#ac2a00"/><rect x="-3" y="59" width="12" height="1" fill="#461500"/><rect x="9" y="59" width="1" height="1" fill="#4c1500"/><rect x="10" y="59" width="1" height="1" fill="#762500"/><rect x="11" y="59" width="1" height="1" fill="#802500"/><rect x="12" y="59" width="1" height="1" fill="#6d2500"/><rect x="13" y="59" width="1" height="1" fill="#722500"/><rect x="14" y="59" width="1" height="1" fill="#7d2500"/><rect x="15" y="59" width="1" height="1" fill="#842500"/><rect x="16" y="59" width="1" height="1" fill="#6d1000"/><rect x="17" y="59" width="1" height="1" fill="#6b1700"/><rect x="18" y="59" width="2" height="1" fill="#7e1700"/><rect x="20" y="59" width="1" height="1" fill="#842a00"/><rect x="21" y="59" width="1" height="1" fill="#ae2a00"/><rect x="22" y="59" width="1" height="1" fill="#a92a00"/><rect x="23" y="59" width="1" height="1" fill="#972a00"/><rect x="24" y="59" width="1" height="1" fill="#9e2a00"/><rect x="25" y="59" width="1" height="1" fill="#a52a00"/><rect x="26" y="59" width="2" height="1" fill="#992a00"/><rect x="28" y="59" width="1" height="1" fill="#a72a00"/><rect x="29" y="59" width="6" height="1" fill="#ac2a00"/><rect x="-3" y="60" width="12" height="1" fill="#461500"/><rect x="9" y="60" width="1" height="1" fill="#4c1500"/><rect x="10" y="60" width="1" height="1" fill="#762500"/><rect x="11" y="60" width="1" height="1" fill="#802500"/><rect x="12" y="60" width="1" height="1" fill="#6d2500"/><rect x="13" y="60" width="1" height="1" fill="#722500"/><rect x="14" y="60" width="1" height="1" fill="#7d2500"/><rect x="15" y="60" width="1" height="1" fill="#842500"/><rect x="16" y="60" width="1" height="1" fill="#6d1000"/><rect x="17" y="60" width="1" height="1" fill="#6b1700"/><rect x="18" y="60" width="2" height="1" fill="#7e1700"/><rect x="20" y="60" width="1" height="1" fill="#842a00"/><rect x="21" y="60" width="1" height="1" fill="#ae2a00"/><rect x="22" y="60" width="1" height="1" fill="#a92a00"/><rect x="23" y="60" width="1" height="1" fill="#972a00"/><rect x="24" y="60" width="1" height="1" fill="#9e2a00"/><rect x="25" y="60" width="1" height="1" fill="#a52a00"/><rect x="26" y="60" width="2" height="1" fill="#992a00"/><rect x="28" y="60" width="1" height="1" fill="#a72a00"/><rect x="29" y="60" width="6" height="1" fill="#ac2a00"/></g></g>
<g><ellipse cx="90.0" cy="74.0" rx="11.0" ry="11.0" transform="rotate(0 90.0 74.0)" fill="#c33800"/><ellipse cx="133.0" cy="102.0" rx="13.0" ry="7.0" transform="rotate(0 133.0 102.0)" fill="#c33800"/><ellipse cx="244.0" cy="47.0" rx="13.0" ry="8.0" transform="rotate(0 244.0 47.0)" fill="#cc3800"/><polyline points="9.0,621.9 30.2,650.2 49.7,673.2 67.4,694.4 85.1,713.9 101.0,728.0" fill="none" stroke="#cc4a00" stroke-width="13" stroke-linecap="round" stroke-linejoin="round"/><polyline points="67.4,667.9 88.6,673.2 108.1,680.3 124.0,694.4 136.4,703.3" fill="none" stroke="#d14a00" stroke-width="9" stroke-linecap="round" stroke-linejoin="round"/><polyline points="140.0,682.0 150.6,692.7 163.0,699.7 186.0,696.2 203.7,705.0" fill="none" stroke="#ce4a00" stroke-width="8" stroke-linecap="round" stroke-linejoin="round"/><polyline points="177.1,607.7 194.8,600.6 209.0,593.5" fill="none" stroke="#ce4600" stroke-width="7" stroke-linecap="round" stroke-linejoin="round"/><ellipse cx="22.0" cy="615.0" rx="13.0" ry="20.0" transform="rotate(-25 22.0 615.0)" fill="#c04a00"/><polyline points="159.4,721.0 186.0,724.5 209.0,721.0" fill="none" stroke="#cc4100" stroke-width="6" stroke-linecap="round" stroke-linejoin="round"/><polyline points="32.0,685.6 44.4,705.0" fill="none" stroke="#d34100" stroke-width="5" stroke-linecap="round" stroke-linejoin="round"/><ellipse cx="366.0" cy="671.0" rx="13.0" ry="11.0" transform="rotate(0 366.0 671.0)" fill="#d53800"/><ellipse cx="366.0" cy="701.0" rx="11.0" ry="9.0" transform="rotate(0 366.0 701.0)" fill="#ca2e00"/><ellipse cx="252.4" cy="555.9" rx="17.0" ry="14.0" transform="rotate(0 252.4 555.9)" fill="#c34100"/><ellipse cx="109.9" cy="613.0" rx="6.5" ry="6.5" transform="rotate(0 109.9 613.0)" fill="#d33800"/><ellipse cx="79.8" cy="628.9" rx="4.0" ry="4.0" transform="rotate(0 79.8 628.9)" fill="#d83800"/><ellipse cx="65.6" cy="602.4" rx="3.5" ry="3.5" transform="rotate(0 65.6 602.4)" fill="#d83800"/><ellipse cx="101.0" cy="639.6" rx="6.0" ry="5.0" transform="rotate(0 101.0 639.6)" fill="#431c00"/><ellipse cx="49.7" cy="614.8" rx="6.0" ry="3.0" transform="rotate(0 49.7 614.8)" fill="#431c00"/><ellipse cx="92.2" cy="659.0" rx="5.0" ry="2.5" transform="rotate(0 92.2 659.0)" fill="#481c00"/><ellipse cx="17.0" cy="690.0" rx="8.0" ry="14.0" transform="rotate(0 17.0 690.0)" fill="#4f2e00"/><ellipse cx="28.0" cy="734.0" rx="22.0" ry="8.0" transform="rotate(0 28.0 734.0)" fill="#482500"/><ellipse cx="164.0" cy="634.0" rx="13.0" ry="8.0" transform="rotate(0 164.0 634.0)" fill="#682000"/><ellipse cx="195.0" cy="664.0" rx="9.0" ry="7.0" transform="rotate(0 195.0 664.0)" fill="#682000"/><ellipse cx="134.0" cy="640.0" rx="10.0" ry="3.5" transform="rotate(0 134.0 640.0)" fill="#682000"/><ellipse cx="265.0" cy="342.0" rx="16.0" ry="9.0" transform="rotate(0 265.0 342.0)" fill="#ce4f00"/><ellipse cx="298.0" cy="383.0" rx="22.0" ry="12.0" transform="rotate(0 298.0 383.0)" fill="#d14a00"/><ellipse cx="214.3" cy="341.3" rx="3.0" ry="5.0" transform="rotate(0 214.3 341.3)" fill="#681700"/><polyline points="283.7,523.0 267.2,527.9 253.2,537.8 240.8,542.7 224.4,552.6 211.2,567.4" fill="none" stroke="#dc4600" stroke-width="9" stroke-linecap="round" stroke-linejoin="round"/><polyline points="160.0,315.0 185.0,325.0 205.0,338.0 228.0,352.0" fill="none" stroke="#801700" stroke-width="13" stroke-linecap="round" stroke-linejoin="round"/><polyline points="196.0,333.0 214.0,344.0" fill="none" stroke="#6d1c00" stroke-width="4.5" stroke-linecap="round" stroke-linejoin="round"/><polyline points="150.0,323.0 170.0,336.0 195.0,353.0" fill="none" stroke="#d34a00" stroke-width="3" stroke-linecap="round" stroke-linejoin="round"/><polyline points="172.0,306.0 190.0,314.0" fill="none" stroke="#ce4100" stroke-width="2.5" stroke-linecap="round" stroke-linejoin="round"/><polyline points="150.0,711.0 200.0,713.0 250.0,710.0 290.0,708.0" fill="none" stroke="#cc5800" stroke-width="13" stroke-linecap="round" stroke-linejoin="round"/><ellipse cx="258.0" cy="775.0" rx="15.0" ry="6.5" transform="rotate(50 258.0 775.0)" fill="#b52500"/><polyline points="283.7,523.0 275.4,524.6 267.2,527.9 259.0,533.7 253.2,537.8 247.4,541.0 240.8,542.7 232.6,547.7 224.4,552.6 217.8,560.8 211.2,567.4 206.2,574.0 203.8,582.3" fill="none" stroke="#fd3c00" stroke-width="4.5" stroke-linecap="round" stroke-linejoin="round"/><polyline points="240.8,544.4 242.5,555.9 244.1,565.8 250.7,572.4 255.7,569.1" fill="none" stroke="#fd3c00" stroke-width="4.5" stroke-linecap="round" stroke-linejoin="round"/><polyline points="231.0,496.6 222.7,501.5 216.1,504.8 208.7,509.8" fill="none" stroke="#fd3800" stroke-width="4" stroke-linecap="round" stroke-linejoin="round"/><polyline points="203.0,527.9 199.7,537.8" fill="none" stroke="#fd2e00" stroke-width="3.5" stroke-linecap="round" stroke-linejoin="round"/><polyline points="290.3,588.8 300.1,597.1" fill="none" stroke="#fd2e00" stroke-width="4" stroke-linecap="round" stroke-linejoin="round"/><ellipse cx="216.1" cy="618.4" rx="4.0" ry="4.0" transform="rotate(0 216.1 618.4)" fill="#fd2e00"/><ellipse cx="47.9" cy="675.0" rx="4.5" ry="4.0" transform="rotate(0 47.9 675.0)" fill="#fd2e00"/><polyline points="118.7,692.7 129.4,699.7" fill="none" stroke="#fd2e00" stroke-width="4.5" stroke-linecap="round" stroke-linejoin="round"/><ellipse cx="143.5" cy="685.6" rx="3.5" ry="4.5" transform="rotate(0 143.5 685.6)" fill="#fd2e00"/><ellipse cx="187.8" cy="696.2" rx="5.0" ry="3.5" transform="rotate(0 187.8 696.2)" fill="#fd2e00"/><ellipse cx="205.5" cy="706.8" rx="4.0" ry="4.0" transform="rotate(0 205.5 706.8)" fill="#fd2e00"/><ellipse cx="194.8" cy="621.9" rx="3.5" ry="3.5" transform="rotate(0 194.8 621.9)" fill="#fd2e00"/><ellipse cx="203.7" cy="641.3" rx="3.5" ry="3.5" transform="rotate(0 203.7 641.3)" fill="#fd2e00"/><ellipse cx="109.9" cy="613.0" rx="3.0" ry="3.0" transform="rotate(0 109.9 613.0)" fill="#fd2e00"/><ellipse cx="44.4" cy="705.0" rx="3.0" ry="3.5" transform="rotate(0 44.4 705.0)" fill="#fd2e00"/><polyline points="269.2,696.2 279.8,691.8 294.0,691.8 308.1,696.2 318.7,696.2 332.9,698.8" fill="none" stroke="#fd4100" stroke-width="4.2" stroke-linecap="round" stroke-linejoin="round"/><ellipse cx="291.3" cy="713.9" rx="4.5" ry="4.0" transform="rotate(0 291.3 713.9)" fill="#fd2e00"/><polyline points="294.0,593.5 299.3,598.8" fill="none" stroke="#fd2e00" stroke-width="4" stroke-linecap="round" stroke-linejoin="round"/><polyline points="209.0,683.8 226.7,690.9 244.4,696.2" fill="none" stroke="#ea4100" stroke-width="3.5" stroke-linecap="round" stroke-linejoin="round"/><polyline points="232.0,710.4 253.2,708.6" fill="none" stroke="#ea4100" stroke-width="3.5" stroke-linecap="round" stroke-linejoin="round"/><polyline points="110.1,38.5 105.7,51.8" fill="none" stroke="#fd2500" stroke-width="2.6" stroke-linecap="round" stroke-linejoin="round"/><polyline points="172.0,42.0 163.2,58.9" fill="none" stroke="#fd2500" stroke-width="2.6" stroke-linecap="round" stroke-linejoin="round"/><polyline points="193.3,54.5 186.2,66.9" fill="none" stroke="#fd2500" stroke-width="2.6" stroke-linecap="round" stroke-linejoin="round"/><polyline points="184.4,66.9 178.2,79.2" fill="none" stroke="#fd2500" stroke-width="2.6" stroke-linecap="round" stroke-linejoin="round"/><polyline points="171.2,73.0 165.0,82.8" fill="none" stroke="#fd2500" stroke-width="2.6" stroke-linecap="round" stroke-linejoin="round"/><polyline points="211.0,42.0 206.5,56.2" fill="none" stroke="#fd2500" stroke-width="2.6" stroke-linecap="round" stroke-linejoin="round"/><polyline points="221.6,36.8 218.0,45.6" fill="none" stroke="#fd2500" stroke-width="2.6" stroke-linecap="round" stroke-linejoin="round"/><polyline points="249.9,40.3 243.7,52.7" fill="none" stroke="#fd2500" stroke-width="2.6" stroke-linecap="round" stroke-linejoin="round"/><polyline points="247.3,54.5 246.4,63.3" fill="none" stroke="#fd2500" stroke-width="2.6" stroke-linecap="round" stroke-linejoin="round"/><polyline points="193.3,74.8 188.0,79.2" fill="none" stroke="#fd2500" stroke-width="2.6" stroke-linecap="round" stroke-linejoin="round"/><polyline points="203.9,82.8 202.1,89.0" fill="none" stroke="#fd2500" stroke-width="2.6" stroke-linecap="round" stroke-linejoin="round"/><polyline points="117.2,82.8 115.4,89.9" fill="none" stroke="#fd2500" stroke-width="2.6" stroke-linecap="round" stroke-linejoin="round"/><polyline points="97.7,93.4 95.9,102.3" fill="none" stroke="#fd2500" stroke-width="2.6" stroke-linecap="round" stroke-linejoin="round"/><polyline points="108.3,104.0 106.5,109.3" fill="none" stroke="#fd2500" stroke-width="2.6" stroke-linecap="round" stroke-linejoin="round"/><polyline points="149.9,95.2 150.8,102.3" fill="none" stroke="#fd2500" stroke-width="2.6" stroke-linecap="round" stroke-linejoin="round"/><polyline points="149.0,123.5 150.8,134.1" fill="none" stroke="#fd2500" stroke-width="2.6" stroke-linecap="round" stroke-linejoin="round"/><polyline points="140.2,109.3 142.8,114.6" fill="none" stroke="#fd2500" stroke-width="2.6" stroke-linecap="round" stroke-linejoin="round"/><polyline points="230.4,95.2 229.6,102.3" fill="none" stroke="#fd2500" stroke-width="2.6" stroke-linecap="round" stroke-linejoin="round"/><polyline points="212.7,59.8 211.0,68.6" fill="none" stroke="#fd2500" stroke-width="2.6" stroke-linecap="round" stroke-linejoin="round"/><polyline points="260.5,143.0 264.0,158.9" fill="none" stroke="#fd2500" stroke-width="2.6" stroke-linecap="round" stroke-linejoin="round"/><ellipse cx="301.0" cy="360.0" rx="4.5" ry="7.0" transform="rotate(-10 301.0 360.0)" fill="#fd2a00"/><ellipse cx="262.0" cy="346.6" rx="3.5" ry="3.0" transform="rotate(0 262.0 346.6)" fill="#fd2e00"/><ellipse cx="276.0" cy="334.0" rx="3.5" ry="2.5" transform="rotate(0 276.0 334.0)" fill="#fd2e00"/><ellipse cx="249.7" cy="344.9" rx="3.0" ry="2.5" transform="rotate(0 249.7 344.9)" fill="#fd2e00"/><ellipse cx="309.9" cy="321.0" rx="3.0" ry="3.0" transform="rotate(0 309.9 321.0)" fill="#fd2a00"/><ellipse cx="304.6" cy="293.5" rx="3.0" ry="3.0" transform="rotate(0 304.6 293.5)" fill="#fd2a00"/><ellipse cx="306.3" cy="376.7" rx="4.5" ry="2.5" transform="rotate(0 306.3 376.7)" fill="#fd2e00"/><ellipse cx="278.9" cy="382.0" rx="3.0" ry="5.0" transform="rotate(0 278.9 382.0)" fill="#fd2e00"/><ellipse cx="317.0" cy="383.8" rx="3.0" ry="4.0" transform="rotate(0 317.0 383.8)" fill="#fd2e00"/><ellipse cx="279.8" cy="394.4" rx="4.0" ry="2.5" transform="rotate(0 279.8 394.4)" fill="#fd2e00"/><ellipse cx="346.2" cy="518.8" rx="2.5" ry="3.5" transform="rotate(0 346.2 518.8)" fill="#fd2a00"/><polyline points="301.0,519.6 315.2,514.3" fill="none" stroke="#ef3800" stroke-width="2.8" stroke-linecap="round" stroke-linejoin="round"/><polyline points="322.3,517.9 336.4,510.8" fill="none" stroke="#ef3800" stroke-width="2.8" stroke-linecap="round" stroke-linejoin="round"/><polyline points="288.6,539.1 304.6,537.3" fill="none" stroke="#ef3800" stroke-width="2.8" stroke-linecap="round" stroke-linejoin="round"/><polyline points="318.7,542.7 340.0,546.2" fill="none" stroke="#ef3800" stroke-width="2.8" stroke-linecap="round" stroke-linejoin="round"/><polyline points="355.9,542.7 368.3,549.7" fill="none" stroke="#ef3800" stroke-width="2.8" stroke-linecap="round" stroke-linejoin="round"/><polyline points="322.3,549.7 332.9,555.0" fill="none" stroke="#ef3800" stroke-width="2.8" stroke-linecap="round" stroke-linejoin="round"/><ellipse cx="359.4" cy="562.1" rx="3.0" ry="3.0" transform="rotate(0 359.4 562.1)" fill="#fd2a00"/><ellipse cx="348.8" cy="459.5" rx="4.0" ry="4.0" transform="rotate(0 348.8 459.5)" fill="#fd2e00"/><ellipse cx="345.3" cy="477.2" rx="3.0" ry="4.0" transform="rotate(0 345.3 477.2)" fill="#fd2e00"/><ellipse cx="350.6" cy="498.4" rx="4.0" ry="3.0" transform="rotate(0 350.6 498.4)" fill="#fd2e00"/><polyline points="358.4,769.7 368.3,774.0 379.7,777.5 389.6,781.0 400.9,778.2 413.7,786.7 420.7,792.4" fill="none" stroke="#f12500" stroke-width="4.2" stroke-linecap="round" stroke-dasharray="0.1 8"/><ellipse cx="413.7" cy="788.2" rx="4.0" ry="3.5" transform="rotate(0 413.7 788.2)" fill="#fd2a00"/><ellipse cx="420.7" cy="792.4" rx="3.0" ry="3.0" transform="rotate(0 420.7 792.4)" fill="#fd2a00"/><ellipse cx="385.3" cy="796.0" rx="2.5" ry="2.5" transform="rotate(0 385.3 796.0)" fill="#ef2a00"/><ellipse cx="398.0" cy="805.2" rx="3.0" ry="3.0" transform="rotate(0 398.0 805.2)" fill="#ef2a00"/><polyline points="155.0,704.0 172.0,709.0" fill="none" stroke="#fd3c00" stroke-width="3" stroke-linecap="round" stroke-linejoin="round"/><polyline points="180.0,716.0 198.0,712.0" fill="none" stroke="#fd3c00" stroke-width="3" stroke-linecap="round" stroke-linejoin="round"/><polyline points="222.0,703.0 238.0,708.0" fill="none" stroke="#fd3c00" stroke-width="3" stroke-linecap="round" stroke-linejoin="round"/><polyline points="262.0,716.0 282.0,712.0" fill="none" stroke="#fd3c00" stroke-width="3" stroke-linecap="round" stroke-linejoin="round"/><polyline points="160.0,722.0 176.0,719.0" fill="none" stroke="#fd3c00" stroke-width="3" stroke-linecap="round" stroke-linejoin="round"/></g>
</g>
</g>
<g fill="#8a2be2" shape-rendering="crispEdges"><rect x="259.3" y="35.8" width="13.9" height="13.9"/><rect x="301.0" y="244.0" width="41.6" height="13.9"/><rect x="314.9" y="271.7" width="41.6" height="27.8"/><rect x="314.9" y="313.4" width="13.9" height="13.9"/><rect x="328.7" y="368.9" width="41.6" height="13.9"/><rect x="328.7" y="382.8" width="55.5" height="13.9"/><rect x="342.6" y="396.7" width="41.6" height="41.6"/><rect x="342.6" y="438.3" width="55.5" height="13.9"/><rect x="356.5" y="452.2" width="41.6" height="41.6"/><rect x="356.5" y="493.8" width="55.5" height="13.9"/><rect x="370.4" y="507.7" width="41.6" height="13.9"/><rect x="370.4" y="535.5" width="41.6" height="27.8"/><rect x="384.3" y="563.2" width="41.6" height="13.9"/><rect x="384.3" y="618.7" width="13.9" height="13.9"/><rect x="398.1" y="632.6" width="41.6" height="55.5"/><rect x="412.0" y="688.1" width="27.8" height="41.6"/><rect x="412.0" y="729.8" width="41.6" height="13.9"/><rect x="425.9" y="743.7" width="41.6" height="27.8"/><rect x="439.8" y="799.2" width="13.9" height="13.9"/></g>
<g shape-rendering="crispEdges"><rect x="27" y="35" width="53" height="407.5" fill="#000"/><rect x="57" y="78" width="17" height="32" fill="#640000"/><rect x="57" y="110" width="17" height="32" fill="#ee0000"/><rect x="57" y="142" width="17" height="32" fill="#ff4500"/><rect x="57" y="174" width="17" height="32" fill="#ffa500"/><rect x="57" y="206" width="17" height="32" fill="#ffff00"/><rect x="57" y="238" width="17" height="32" fill="#7cfc00"/><rect x="57" y="270" width="17" height="32" fill="#008b00"/><rect x="57" y="302" width="17" height="32" fill="#00ffff"/><rect x="57" y="334" width="17" height="32" fill="#1080ff"/><rect x="57" y="366" width="17" height="32" fill="#0000ff"/><rect x="57" y="398" width="17" height="32" fill="#8a2be2"/><rect x="56.5" y="77.5" width="18" height="353" fill="none" stroke="#fff" stroke-width="1"/></g>
<path d="M8.5 35V800M1120.5 35V800M148.5 35V800M287.5 35V800M426.5 35V800M564.5 35V800M703.5 35V800M842.5 35V800M981.5 35V800M8 91.5H1121M8 230.5H1121M8 368.5H1121M8 507.5H1121M8 646.5H1121M8 785.5H1121" stroke="#00ffff" stroke-width="1" fill="none" shape-rendering="crispEdges"/>
<polyline points="841.6,4.2 839.5,8.5 837.4,24.0 837.4,36.7 832.4,42.4 828.2,50.8 824.7,57.9 828.9,60.7 833.1,61.4 830.3,63.5 831.7,70.6 831.0,76.2 828.2,74.1 824.0,74.8 825.4,79.0 829.6,83.3 835.2,86.1 840.2,85.4 835.2,88.7 828.2,86.8 825.4,84.7 823.7,87.5 824.0,91.8 822.5,103.0 816.9,109.4 811.2,112.9 810.5,119.0 815.0,125.7 821.3,138.0 829.0,152.0 842.6,168.0 857.4,180.5 871.6,196.5 885.8,208.8 892.8,217.7 898.0,230.0 904.0,242.5 901.7,247.8 908.8,256.6 924.0,254.0 923.0,257.7 907.0,262.0 914.0,274.0 917.6,280.0 921.9,287.0 924.7,297.7 931.8,313.6 937.0,324.0 937.0,332.4 930.0,336.6 925.4,343.7 930.0,350.8 935.3,366.7 942.4,380.9 948.8,395.0 947.7,414.5 944.0,430.4 937.0,440.0 930.0,442.0 924.0,447.0 923.0,453.5 917.6,458.8 912.7,464.0 912.3,476.5 908.8,481.8 905.2,499.5 901.7,513.6 897.0,527.8 891.0,532.0 892.8,542.0 893.5,556.0 891.0,567.7 891.0,585.4 898.0,603.0 908.8,613.7 917.6,629.6 926.5,647.3 933.5,659.7 938.8,673.9 951.2,693.4 965.4,711.0 969.0,723.5 966.0,734.0 967.5,744.7 966.5,762.4 972.5,776.5 976.7,785.4 977.0,799.6" fill="none" stroke="#fff" stroke-width="1" shape-rendering="crispEdges"/>
<ellipse cx="748.4" cy="84.2" rx="3.2" ry="5" transform="rotate(30 748.4 84.2)" fill="none" stroke="#fff" stroke-width="1" shape-rendering="crispEdges"/>
<text x="50.5" y="82.0" text-anchor="end" letter-spacing="0.55" fill="#ffa07a" font-size="11" font-family="Liberation Sans, Arial, sans-serif">100</text><text x="50.5" y="114.0" text-anchor="end" letter-spacing="0.55" fill="#ffa07a" font-size="11" font-family="Liberation Sans, Arial, sans-serif">80</text><text x="50.5" y="146.0" text-anchor="end" letter-spacing="0.55" fill="#ffa07a" font-size="11" font-family="Liberation Sans, Arial, sans-serif">70</text><text x="50.5" y="178.0" text-anchor="end" letter-spacing="0.55" fill="#ffa07a" font-size="11" font-family="Liberation Sans, Arial, sans-serif">60</text><text x="50.5" y="210.0" text-anchor="end" letter-spacing="0.55" fill="#ffa07a" font-size="11" font-family="Liberation Sans, Arial, sans-serif">50</text><text x="50.5" y="242.0" text-anchor="end" letter-spacing="0.55" fill="#ffa07a" font-size="11" font-family="Liberation Sans, Arial, sans-serif">40</text><text x="50.5" y="274.0" text-anchor="end" letter-spacing="0.55" fill="#ffa07a" font-size="11" font-family="Liberation Sans, Arial, sans-serif">30</text><text x="50.5" y="306.0" text-anchor="end" letter-spacing="0.55" fill="#ffa07a" font-size="11" font-family="Liberation Sans, Arial, sans-serif">25</text><text x="50.5" y="338.0" text-anchor="end" letter-spacing="0.55" fill="#ffa07a" font-size="11" font-family="Liberation Sans, Arial, sans-serif">20</text><text x="50.5" y="370.0" text-anchor="end" letter-spacing="0.55" fill="#ffa07a" font-size="11" font-family="Liberation Sans, Arial, sans-serif">15</text><text x="50.5" y="402.0" text-anchor="end" letter-spacing="0.55" fill="#ffa07a" font-size="11" font-family="Liberation Sans, Arial, sans-serif">10</text><text x="50.5" y="433.2" text-anchor="end" letter-spacing="0.55" fill="#ffa07a" font-size="11" font-family="Liberation Sans, Arial, sans-serif">0</text><text x="11.5" y="71.5" fill="#ffa07a" font-size="10.65" font-family="Liberation Sans, Arial, sans-serif">BBALB (%)</text><text x="9.5" y="27" fill="#ffb000" font-size="10.6" font-family="Liberation Sans, Arial, sans-serif">NASA Langley (M04.0)</text>
<text x="472" y="15.5" text-anchor="middle" fill="#fff" font-size="16.5" font-family="Liberation Sans, Arial, sans-serif">BROADBAND ALBEDO</text><text x="447" y="34" text-anchor="middle" fill="#fff" font-size="14" font-family="Liberation Sans, Arial, sans-serif">Oct 22, 2017 18:15 UTC</text>
<text xml:space="preserve" transform="scale(1.15 1)" x="121.30 128.26 135.22" y="34.0" fill="#ff0000" font-size="11" font-family="Liberation Sans, Arial, sans-serif">15W</text><text xml:space="preserve" transform="scale(1.15 1)" x="242.17 249.13 256.09" y="34.0" fill="#ff0000" font-size="11" font-family="Liberation Sans, Arial, sans-serif">10W</text><text xml:space="preserve" transform="scale(1.15 1)" x="368.26 375.22" y="34.0" fill="#ff0000" font-size="11" font-family="Liberation Sans, Arial, sans-serif">5W</text><text xml:space="preserve" transform="scale(1.15 1)" x="485.65" y="34.0" fill="#ff0000" font-size="11" font-family="Liberation Sans, Arial, sans-serif">0</text><text xml:space="preserve" transform="scale(1.15 1)" x="611.74 618.70" y="34.0" fill="#ff0000" font-size="11" font-family="Liberation Sans, Arial, sans-serif">5E</text><text xml:space="preserve" transform="scale(1.15 1)" x="725.48 732.43 739.39" y="34.0" fill="#ff0000" font-size="11" font-family="Liberation Sans, Arial, sans-serif">10E</text><text xml:space="preserve" transform="scale(1.15 1)" x="849.57 856.52 863.48" y="34.0" fill="#ff0000" font-size="11" font-family="Liberation Sans, Arial, sans-serif">15E</text><rect x="968" y="84" width="22" height="11" fill="#000"/><text xml:space="preserve" transform="scale(1.15 1)" x="848.00" y="93.9" fill="#ff0000" font-size="11" font-family="Liberation Sans, Arial, sans-serif">0</text><rect x="971" y="223" width="28" height="11" fill="#000"/><text xml:space="preserve" transform="scale(1.15 1)" x="853.04 860.52" y="232.9" fill="#ff0000" font-size="11" font-family="Liberation Sans, Arial, sans-serif">5S</text><rect x="971" y="361" width="28" height="11" fill="#000"/><text xml:space="preserve" transform="scale(1.15 1)" x="846.26 853.74 861.22" y="370.9" fill="#ff0000" font-size="11" font-family="Liberation Sans, Arial, sans-serif">10S</text><rect x="973" y="500" width="27" height="11" fill="#000"/><text xml:space="preserve" transform="scale(1.15 1)" x="848.00 855.48 862.96" y="509.9" fill="#ff0000" font-size="11" font-family="Liberation Sans, Arial, sans-serif">15S</text><rect x="973" y="639" width="27" height="11" fill="#000"/><text xml:space="preserve" transform="scale(1.15 1)" x="848.00 855.48 862.96" y="648.9" fill="#ff0000" font-size="11" font-family="Liberation Sans, Arial, sans-serif">20S</text>
<text xml:space="preserve" transform="scale(1.22 1)" x="257.79 265.16 272.54 279.92 287.30 294.67 302.05 309.43 316.80 324.18 331.56 338.93 346.31 353.69 361.07 368.44 375.82 383.20 390.57 397.95 405.33 412.70 420.08 427.46 434.84 442.21 449.59 456.97 464.34 471.72 479.10 486.48 493.85 501.23 508.61 515.98 523.36 530.74 538.11 545.49 552.87 560.25 567.62 575.00 582.38 589.75 597.13 604.51 611.89 619.26 626.64 634.02 641.39 648.77 656.15 663.52" y="847.0" fill="#ffffff" font-size="10.5" font-family="Liberation Sans, Arial, sans-serif">MT10  BROADBAND ALBEDO   OCT 22, 2017 18:15Z   NASA LARC</text>
</svg>
</body></html>
